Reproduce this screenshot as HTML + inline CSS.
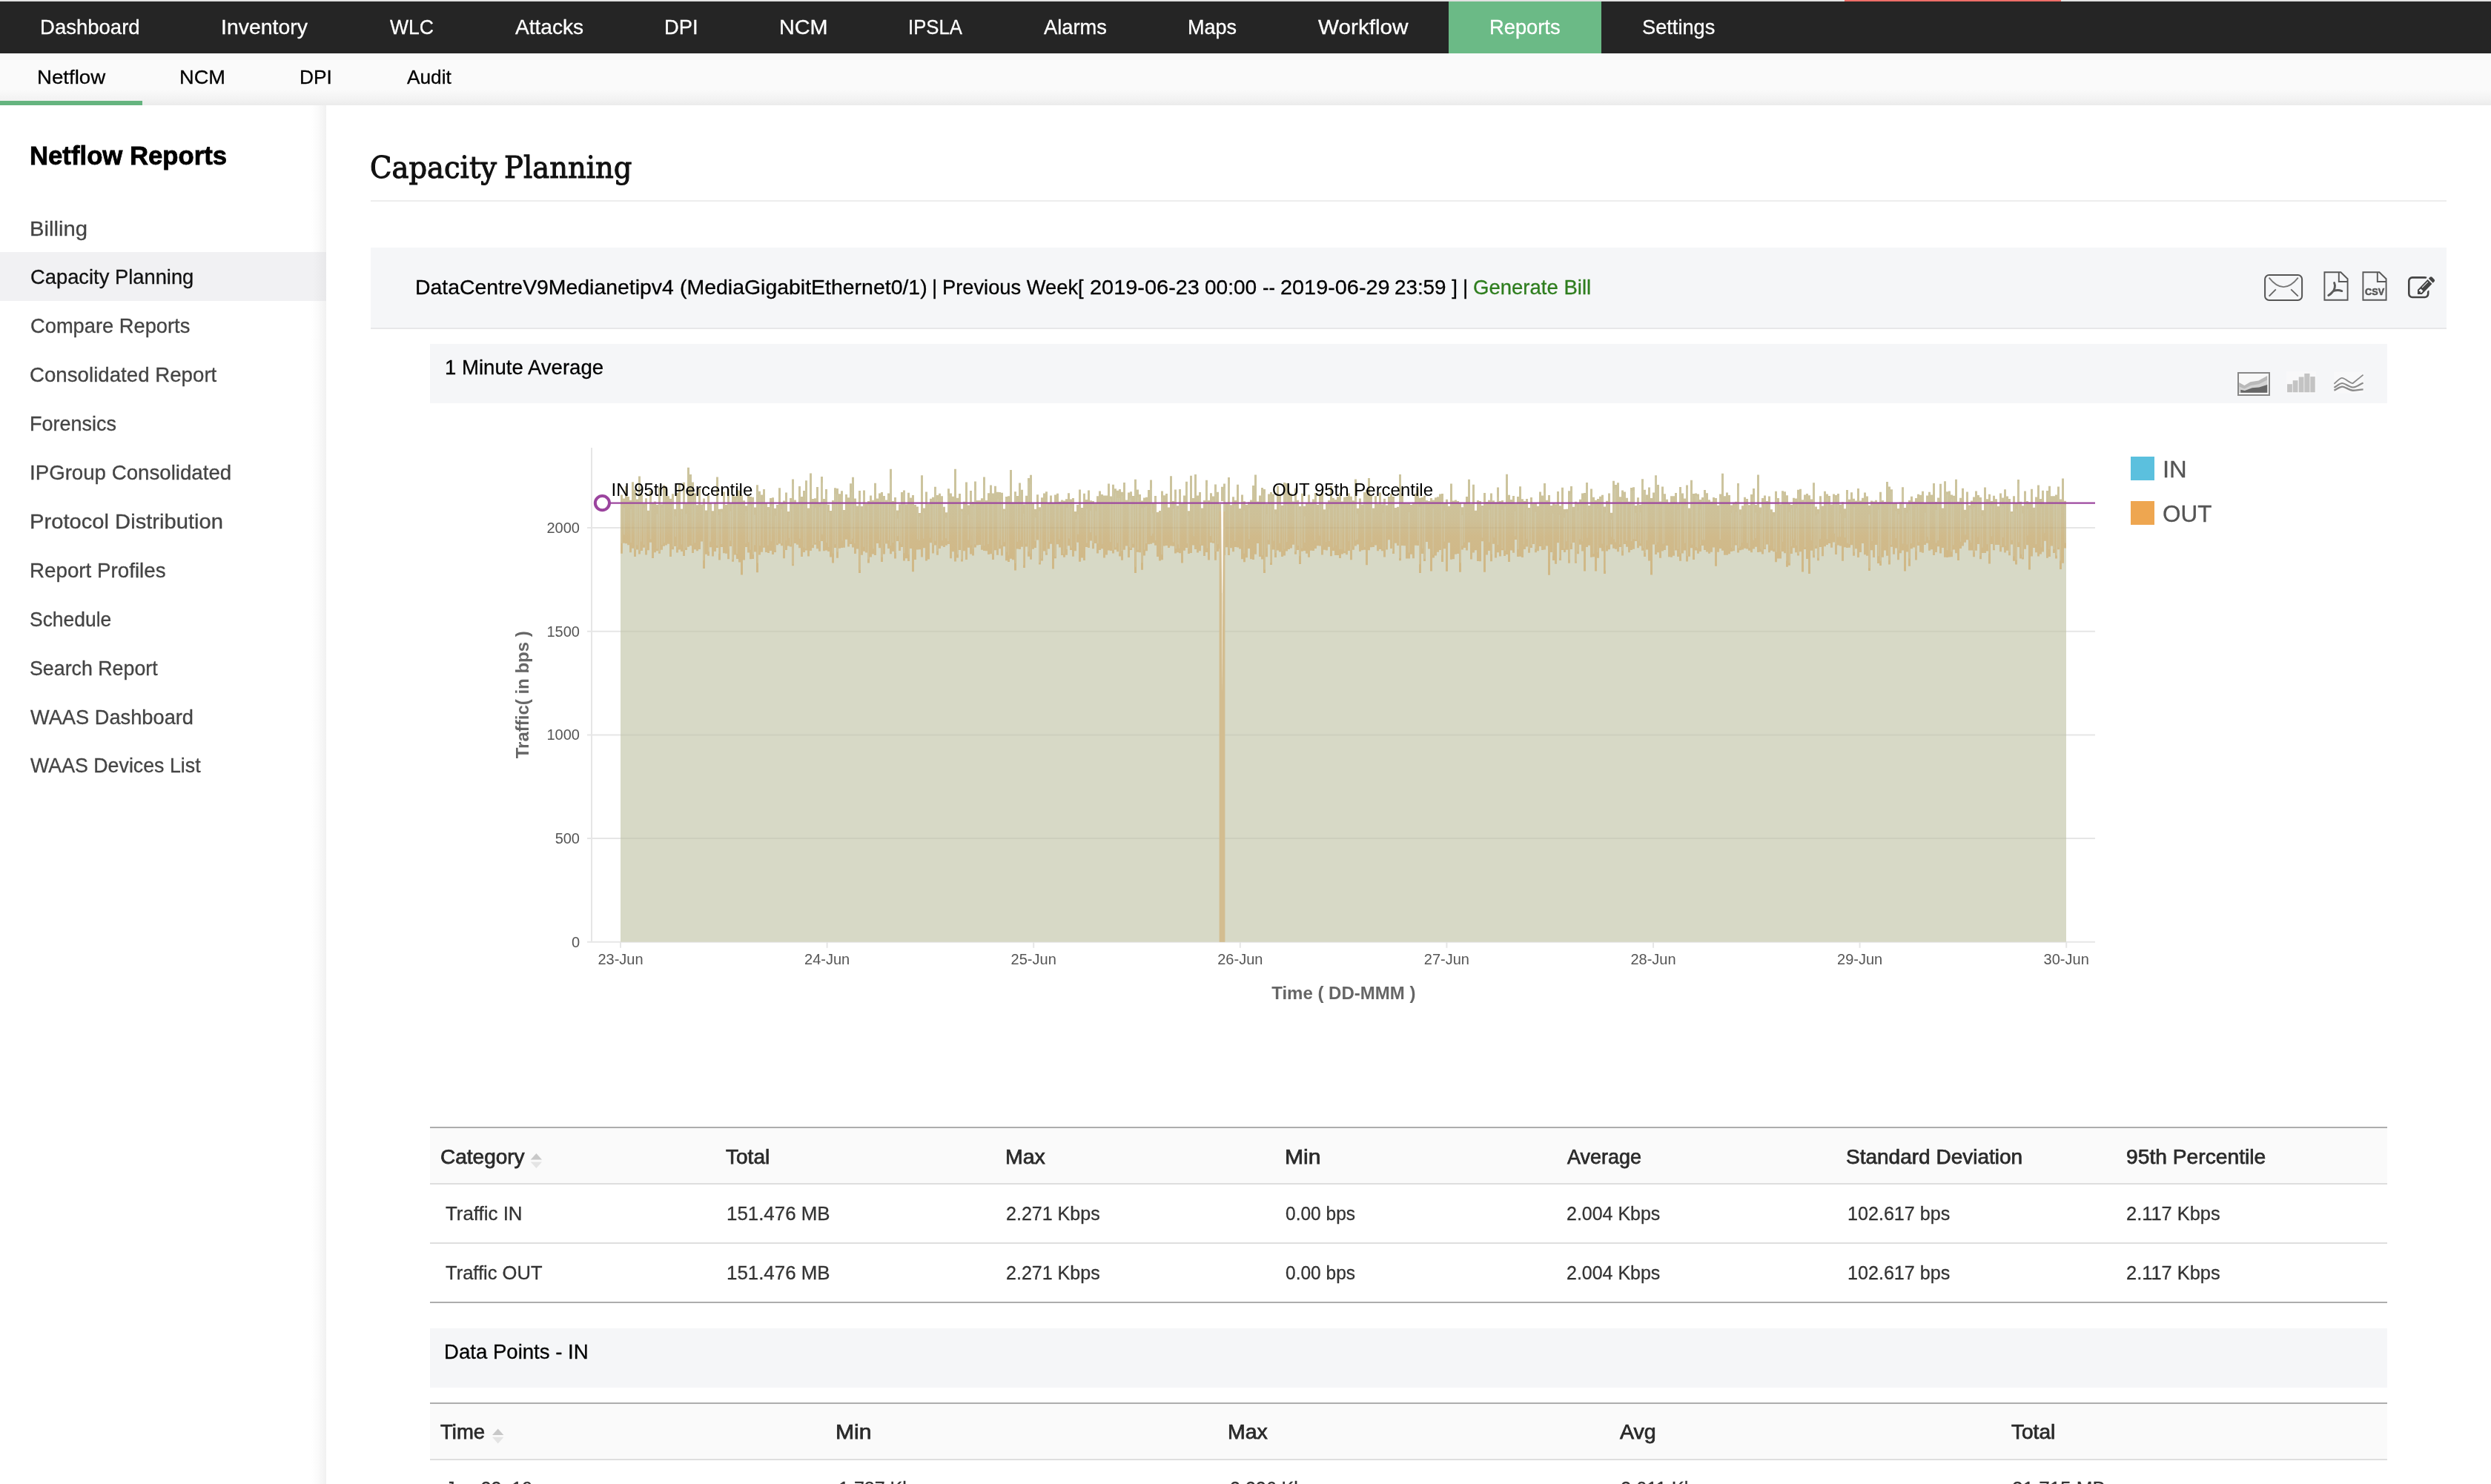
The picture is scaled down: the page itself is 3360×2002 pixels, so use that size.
<!DOCTYPE html>
<html lang="en"><head><meta charset="utf-8"><title>Capacity Planning</title>
<style>
html,body{margin:0;padding:0;background:#fff}
body{width:3360px;height:2002px;position:relative;overflow:hidden;font-family:'Liberation Sans',sans-serif}
.b{position:absolute}
.t{position:absolute;white-space:pre;transform-origin:0 0;display:block}
svg{position:absolute;left:0;top:0}
</style></head><body>
<div class="b" style="left:0;top:0;width:3360px;height:2px;background:#e2e2e2"></div>
<div class="b" style="left:2488px;top:0;width:292px;height:2px;background:#ee6e68"></div>
<div class="b" style="left:0;top:2px;width:3360px;height:70px;background:#252525"></div>
<div class="b" style="left:1954px;top:2px;width:206px;height:70px;background:#6bba86"></div>
<div class="b" style="left:0;top:72px;width:3360px;height:70px;background:linear-gradient(#fafafa 0,#fafafa 70%,#f3f3f3 88%,#ebebeb 100%)"></div>
<div class="b" style="left:0;top:136px;width:192px;height:6px;background:#65b47f"></div>
<div class="b" style="left:420px;top:142px;width:20px;height:1860px;background:linear-gradient(90deg,#fff 0,#fbfbfb 40%,#f1f1f1 100%)"></div>
<div class="b" style="left:0;top:340px;width:440px;height:66px;background:linear-gradient(90deg,#f1f1f3 0,#f1f1f3 96%,#e8e8ea 100%)"></div>
<div class="b" style="left:500px;top:270px;width:2800px;height:2px;background:#ededed"></div>
<div class="b" style="left:500px;top:334px;width:2800px;height:108px;background:#f5f6f8;border-bottom:2px solid #e7e7e9"></div>
<div class="b" style="left:580px;top:464px;width:2640px;height:80px;background:#f5f6f8"></div>
<!-- table 1 -->
<div class="b" style="left:580px;top:1520px;width:2640px;height:2px;background:#adadad"></div>
<div class="b" style="left:580px;top:1522px;width:2640px;height:74px;background:#fafafa"></div>
<div class="b" style="left:580px;top:1596px;width:2640px;height:2px;background:#dedede"></div>
<div class="b" style="left:580px;top:1676px;width:2640px;height:2px;background:#dedede"></div>
<div class="b" style="left:580px;top:1756px;width:2640px;height:2px;background:#adadad"></div>
<div class="b" style="left:580px;top:1792px;width:2640px;height:80px;background:#f5f6f8"></div>
<div class="b" style="left:580px;top:1892px;width:2640px;height:2px;background:#adadad"></div>
<div class="b" style="left:580px;top:1894px;width:2640px;height:74px;background:#fafafa"></div>
<div class="b" style="left:580px;top:1968px;width:2640px;height:2px;background:#dedede"></div>
<svg class="chart" style="will-change:transform" width="3360" height="2002" viewBox="0 0 3360 2002">
<defs><linearGradient id="bg" x1="0" y1="655" x2="0" y2="770" gradientUnits="userSpaceOnUse"><stop offset="0" stop-color="#ccc49e"/><stop offset="0.4" stop-color="#cec097"/><stop offset="0.6" stop-color="#d0ba8b"/><stop offset="1" stop-color="#d0b886"/></linearGradient></defs>
<g fill="none"><line x1="792" x2="2826" y1="1131.1" y2="1131.1" stroke="#e6e6e6" stroke-width="2"/><line x1="792" x2="2826" y1="991.4" y2="991.4" stroke="#e6e6e6" stroke-width="2"/><line x1="792" x2="2826" y1="851.7" y2="851.7" stroke="#e6e6e6" stroke-width="2"/><line x1="792" x2="2826" y1="712.0" y2="712.0" stroke="#e6e6e6" stroke-width="2"/>
<line x1="798" x2="798" y1="604" y2="1270.8" stroke="#e6e6e6" stroke-width="2"/>
<line x1="792" x2="2826" y1="1270.8" y2="1270.8" stroke="#e6e6e6" stroke-width="2"/><line x1="837.0" x2="837.0" y1="1270.8" y2="1278.8" stroke="#e6e6e6" stroke-width="2"/><line x1="1115.6" x2="1115.6" y1="1270.8" y2="1278.8" stroke="#e6e6e6" stroke-width="2"/><line x1="1394.2" x2="1394.2" y1="1270.8" y2="1278.8" stroke="#e6e6e6" stroke-width="2"/><line x1="1672.8" x2="1672.8" y1="1270.8" y2="1278.8" stroke="#e6e6e6" stroke-width="2"/><line x1="1951.4" x2="1951.4" y1="1270.8" y2="1278.8" stroke="#e6e6e6" stroke-width="2"/><line x1="2230.0" x2="2230.0" y1="1270.8" y2="1278.8" stroke="#e6e6e6" stroke-width="2"/><line x1="2508.6" x2="2508.6" y1="1270.8" y2="1278.8" stroke="#e6e6e6" stroke-width="2"/><line x1="2787.2" x2="2787.2" y1="1270.8" y2="1278.8" stroke="#e6e6e6" stroke-width="2"/></g>
<path d="M837.0 1270.8L837.00 745.8h3.00L840.00 731.7h3.00L843.00 732.3h3.00L846.00 734.3h3.00L849.00 744.2h3.00L852.00 738.7h3.00L855.00 749.9h3.00L858.00 740.4h3.00L861.00 746.4h3.00L864.00 741.9h3.00L867.00 737.7h3.00L870.00 747.6h3.00L873.00 741.3h3.00L876.00 730.7h3.00L879.00 751.9h3.00L882.00 744.3h3.00L885.00 742.3h3.00L888.00 745.7h3.00L891.00 740.7h3.00L894.00 735.7h3.00L897.00 734.5h3.00L900.00 732.7h3.00L903.00 750.0h3.00L906.00 740.2h3.00L909.00 735.9h3.00L912.00 744.5h3.00L915.00 740.4h3.00L918.00 743.1h3.00L921.00 748.9h3.00L924.00 740.9h3.00L927.00 736.8h3.00L930.00 735.2h3.00L933.00 745.0h3.00L936.00 740.3h3.00L939.00 742.2h3.00L942.00 739.9h3.00L945.00 729.6h3.00L948.00 766.0h3.00L951.00 746.8h3.00L954.00 748.7h3.00L957.00 737.2h3.00L960.00 749.6h3.00L963.00 743.1h3.00L966.00 738.0h3.00L969.00 754.5h3.00L972.00 737.1h3.00L975.00 745.2h3.00L978.00 745.8h3.00L981.00 753.3h3.00L984.00 736.0h3.00L987.00 756.7h3.00L990.00 747.5h3.00L993.00 753.0h3.00L996.00 757.4h3.00L999.00 774.4h3.00L1002.00 754.4h3.00L1005.00 736.9h3.00L1008.00 744.4h3.00L1011.00 753.3h3.00L1014.00 753.0h3.00L1017.00 743.4h3.00L1020.00 771.2h3.00L1023.00 747.5h3.00L1026.00 743.8h3.00L1029.00 737.8h3.00L1032.00 743.9h3.00L1035.00 744.9h3.00L1038.00 741.9h3.00L1041.00 746.9h3.00L1044.00 743.9h3.00L1047.00 734.3h3.00L1050.00 732.4h3.00L1053.00 735.3h3.00L1056.00 752.2h3.00L1059.00 740.9h3.00L1062.00 735.5h3.00L1065.00 736.5h3.00L1068.00 762.3h3.00L1071.00 732.0h3.00L1074.00 733.7h3.00L1077.00 738.3h3.00L1080.00 750.0h3.00L1083.00 744.1h3.00L1086.00 741.4h3.00L1089.00 749.5h3.00L1092.00 741.9h3.00L1095.00 738.2h3.00L1098.00 733.8h3.00L1101.00 739.2h3.00L1104.00 742.8h3.00L1107.00 728.9h3.00L1110.00 742.3h3.00L1113.00 741.6h3.00L1116.00 742.9h3.00L1119.00 750.4h3.00L1122.00 758.5h3.00L1125.00 738.0h3.00L1128.00 751.7h3.00L1131.00 738.8h3.00L1134.00 738.1h3.00L1137.00 737.7h3.00L1140.00 726.8h3.00L1143.00 736.6h3.00L1146.00 733.1h3.00L1149.00 737.4h3.00L1152.00 745.9h3.00L1155.00 739.5h3.00L1158.00 771.9h3.00L1161.00 747.7h3.00L1164.00 742.8h3.00L1167.00 744.4h3.00L1170.00 758.5h3.00L1173.00 750.6h3.00L1176.00 746.4h3.00L1179.00 748.1h3.00L1182.00 732.1h3.00L1185.00 738.2h3.00L1188.00 757.0h3.00L1191.00 746.5h3.00L1194.00 732.6h3.00L1197.00 739.1h3.00L1200.00 746.2h3.00L1203.00 743.1h3.00L1206.00 752.6h3.00L1209.00 729.1h3.00L1212.00 741.9h3.00L1215.00 736.9h3.00L1218.00 755.4h3.00L1221.00 752.3h3.00L1224.00 756.1h3.00L1227.00 739.0h3.00L1230.00 770.3h3.00L1233.00 754.0h3.00L1236.00 740.4h3.00L1239.00 740.2h3.00L1242.00 750.5h3.00L1245.00 738.2h3.00L1248.00 755.6h3.00L1251.00 753.4h3.00L1254.00 731.3h3.00L1257.00 745.6h3.00L1260.00 734.4h3.00L1263.00 747.8h3.00L1266.00 739.0h3.00L1269.00 735.5h3.00L1272.00 737.1h3.00L1275.00 734.8h3.00L1278.00 733.1h3.00L1281.00 752.3h3.00L1284.00 743.2h3.00L1287.00 756.4h3.00L1290.00 751.5h3.00L1293.00 741.0h3.00L1296.00 756.6h3.00L1299.00 742.3h3.00L1302.00 754.0h3.00L1305.00 737.8h3.00L1308.00 746.5h3.00L1311.00 748.5h3.00L1314.00 737.4h3.00L1317.00 734.5h3.00L1320.00 733.9h3.00L1323.00 740.7h3.00L1326.00 742.1h3.00L1329.00 742.3h3.00L1332.00 747.0h3.00L1335.00 746.3h3.00L1338.00 753.9h3.00L1341.00 741.3h3.00L1344.00 747.8h3.00L1347.00 739.2h3.00L1350.00 748.4h3.00L1353.00 736.2h3.00L1356.00 755.2h3.00L1359.00 756.9h3.00L1362.00 752.8h3.00L1365.00 754.3h3.00L1368.00 768.6h3.00L1371.00 739.6h3.00L1374.00 740.0h3.00L1377.00 736.8h3.00L1380.00 765.0h3.00L1383.00 736.4h3.00L1386.00 749.8h3.00L1389.00 753.7h3.00L1392.00 739.8h3.00L1395.00 738.1h3.00L1398.00 727.5h3.00L1401.00 760.4h3.00L1404.00 755.5h3.00L1407.00 742.6h3.00L1410.00 747.8h3.00L1413.00 739.5h3.00L1416.00 732.7h3.00L1419.00 766.5h3.00L1422.00 752.2h3.00L1425.00 733.3h3.00L1428.00 737.5h3.00L1431.00 748.1h3.00L1434.00 750.7h3.00L1437.00 747.8h3.00L1440.00 735.3h3.00L1443.00 740.9h3.00L1446.00 749.7h3.00L1449.00 742.3h3.00L1452.00 730.8h3.00L1455.00 756.8h3.00L1458.00 751.6h3.00L1461.00 755.0h3.00L1464.00 737.0h3.00L1467.00 737.9h3.00L1470.00 728.5h3.00L1473.00 739.2h3.00L1476.00 732.0h3.00L1479.00 745.5h3.00L1482.00 741.1h3.00L1485.00 739.2h3.00L1488.00 751.5h3.00L1491.00 747.6h3.00L1494.00 741.4h3.00L1497.00 742.1h3.00L1500.00 745.5h3.00L1503.00 740.4h3.00L1506.00 743.2h3.00L1509.00 749.6h3.00L1512.00 754.8h3.00L1515.00 740.7h3.00L1518.00 735.5h3.00L1521.00 750.9h3.00L1524.00 741.0h3.00L1527.00 737.8h3.00L1530.00 771.9h3.00L1533.00 743.7h3.00L1536.00 744.3h3.00L1539.00 767.8h3.00L1542.00 748.5h3.00L1545.00 742.3h3.00L1548.00 733.2h3.00L1551.00 732.8h3.00L1554.00 731.5h3.00L1557.00 734.7h3.00L1560.00 749.9h3.00L1563.00 755.6h3.00L1566.00 754.2h3.00L1569.00 735.4h3.00L1572.00 735.0h3.00L1575.00 738.1h3.00L1578.00 735.5h3.00L1581.00 735.7h3.00L1584.00 745.4h3.00L1587.00 744.3h3.00L1590.00 745.3h3.00L1593.00 758.5h3.00L1596.00 741.7h3.00L1599.00 737.9h3.00L1602.00 746.0h3.00L1605.00 745.0h3.00L1608.00 734.6h3.00L1611.00 740.1h3.00L1614.00 744.4h3.00L1617.00 742.3h3.00L1620.00 735.1h3.00L1623.00 749.0h3.00L1626.00 743.9h3.00L1629.00 754.5h3.00L1632.00 731.0h3.00L1635.00 731.7h3.00L1638.00 754.7h3.00L1641.00 742.9h3.00L1644.00 739.2h3.00L1647.00 749.0h3.00L1650.00 748.0h3.00L1653.00 737.2h3.00L1656.00 748.1h3.00L1659.00 738.2h3.00L1662.00 743.2h3.00L1665.00 737.0h3.00L1668.00 737.5h3.00L1671.00 739.5h3.00L1674.00 753.2h3.00L1677.00 757.3h3.00L1680.00 751.3h3.00L1683.00 739.1h3.00L1686.00 753.3h3.00L1689.00 754.1h3.00L1692.00 746.7h3.00L1695.00 732.1h3.00L1698.00 750.0h3.00L1701.00 753.5h3.00L1704.00 772.1h3.00L1707.00 750.2h3.00L1710.00 733.4h3.00L1713.00 760.9h3.00L1716.00 740.4h3.00L1719.00 751.1h3.00L1722.00 741.6h3.00L1725.00 743.5h3.00L1728.00 750.1h3.00L1731.00 748.4h3.00L1734.00 742.6h3.00L1737.00 739.9h3.00L1740.00 738.6h3.00L1743.00 733.8h3.00L1746.00 746.8h3.00L1749.00 741.0h3.00L1752.00 759.9h3.00L1755.00 742.8h3.00L1758.00 742.1h3.00L1761.00 745.7h3.00L1764.00 750.8h3.00L1767.00 741.7h3.00L1770.00 742.1h3.00L1773.00 739.0h3.00L1776.00 735.3h3.00L1779.00 735.5h3.00L1782.00 747.6h3.00L1785.00 740.7h3.00L1788.00 741.6h3.00L1791.00 736.8h3.00L1794.00 749.2h3.00L1797.00 742.1h3.00L1800.00 747.9h3.00L1803.00 748.1h3.00L1806.00 752.1h3.00L1809.00 746.4h3.00L1812.00 745.3h3.00L1815.00 747.2h3.00L1818.00 742.0h3.00L1821.00 754.2h3.00L1824.00 740.8h3.00L1827.00 735.5h3.00L1830.00 733.5h3.00L1833.00 743.0h3.00L1836.00 741.2h3.00L1839.00 740.8h3.00L1842.00 761.2h3.00L1845.00 741.3h3.00L1848.00 737.2h3.00L1851.00 737.1h3.00L1854.00 734.5h3.00L1857.00 742.2h3.00L1860.00 740.1h3.00L1863.00 742.2h3.00L1866.00 750.5h3.00L1869.00 740.5h3.00L1872.00 727.2h3.00L1875.00 739.0h3.00L1878.00 745.9h3.00L1881.00 731.7h3.00L1884.00 734.9h3.00L1887.00 755.3h3.00L1890.00 734.9h3.00L1893.00 735.2h3.00L1896.00 752.5h3.00L1899.00 752.6h3.00L1902.00 746.7h3.00L1905.00 752.2h3.00L1908.00 734.8h3.00L1911.00 735.0h3.00L1914.00 772.0h3.00L1917.00 746.1h3.00L1920.00 755.9h3.00L1923.00 730.0h3.00L1926.00 739.6h3.00L1929.00 769.6h3.00L1932.00 751.4h3.00L1935.00 748.6h3.00L1938.00 743.8h3.00L1941.00 741.0h3.00L1944.00 756.9h3.00L1947.00 739.3h3.00L1950.00 769.7h3.00L1953.00 731.3h3.00L1956.00 753.8h3.00L1959.00 753.3h3.00L1962.00 746.8h3.00L1965.00 746.1h3.00L1968.00 770.7h3.00L1971.00 740.4h3.00L1974.00 738.0h3.00L1977.00 741.5h3.00L1980.00 730.7h3.00L1983.00 753.6h3.00L1986.00 744.5h3.00L1989.00 741.2h3.00L1992.00 756.1h3.00L1995.00 756.3h3.00L1998.00 729.2h3.00L2001.00 770.7h3.00L2004.00 747.6h3.00L2007.00 742.1h3.00L2010.00 756.3h3.00L2013.00 732.7h3.00L2016.00 751.4h3.00L2019.00 744.2h3.00L2022.00 749.4h3.00L2025.00 741.3h3.00L2028.00 749.0h3.00L2031.00 747.0h3.00L2034.00 757.1h3.00L2037.00 741.5h3.00L2040.00 744.7h3.00L2043.00 727.0h3.00L2046.00 749.9h3.00L2049.00 749.8h3.00L2052.00 751.1h3.00L2055.00 739.9h3.00L2058.00 736.6h3.00L2061.00 744.8h3.00L2064.00 737.9h3.00L2067.00 733.0h3.00L2070.00 744.3h3.00L2073.00 742.3h3.00L2076.00 736.1h3.00L2079.00 741.0h3.00L2082.00 740.5h3.00L2085.00 735.4h3.00L2088.00 774.8h3.00L2091.00 744.0h3.00L2094.00 755.0h3.00L2097.00 759.8h3.00L2100.00 731.3h3.00L2103.00 755.1h3.00L2106.00 740.9h3.00L2109.00 744.0h3.00L2112.00 740.8h3.00L2115.00 758.7h3.00L2118.00 740.0h3.00L2121.00 731.1h3.00L2124.00 758.8h3.00L2127.00 746.3h3.00L2130.00 733.7h3.00L2133.00 742.4h3.00L2136.00 769.6h3.00L2139.00 737.1h3.00L2142.00 734.8h3.00L2145.00 750.8h3.00L2148.00 750.2h3.00L2151.00 769.6h3.00L2154.00 751.7h3.00L2157.00 738.3h3.00L2160.00 742.6h3.00L2163.00 773.0h3.00L2166.00 742.4h3.00L2169.00 740.3h3.00L2172.00 733.4h3.00L2175.00 738.8h3.00L2178.00 739.8h3.00L2181.00 743.3h3.00L2184.00 737.1h3.00L2187.00 748.6h3.00L2190.00 733.0h3.00L2193.00 736.7h3.00L2196.00 744.3h3.00L2199.00 741.1h3.00L2202.00 739.7h3.00L2205.00 728.9h3.00L2208.00 738.2h3.00L2211.00 735.6h3.00L2214.00 741.8h3.00L2217.00 750.0h3.00L2220.00 740.6h3.00L2223.00 755.5h3.00L2226.00 774.4h3.00L2229.00 733.6h3.00L2232.00 746.9h3.00L2235.00 744.2h3.00L2238.00 751.7h3.00L2241.00 742.6h3.00L2244.00 741.1h3.00L2247.00 735.1h3.00L2250.00 750.2h3.00L2253.00 750.7h3.00L2256.00 748.8h3.00L2259.00 741.6h3.00L2262.00 749.9h3.00L2265.00 755.7h3.00L2268.00 745.4h3.00L2271.00 741.6h3.00L2274.00 756.5h3.00L2277.00 749.7h3.00L2280.00 738.2h3.00L2283.00 753.9h3.00L2286.00 741.6h3.00L2289.00 745.7h3.00L2292.00 743.0h3.00L2295.00 735.1h3.00L2298.00 741.1h3.00L2301.00 743.6h3.00L2304.00 745.8h3.00L2307.00 743.7h3.00L2310.00 737.6h3.00L2313.00 762.7h3.00L2316.00 743.8h3.00L2319.00 738.9h3.00L2322.00 741.7h3.00L2325.00 747.7h3.00L2328.00 747.8h3.00L2331.00 746.3h3.00L2334.00 743.1h3.00L2337.00 742.3h3.00L2340.00 734.4h3.00L2343.00 744.4h3.00L2346.00 741.3h3.00L2349.00 740.6h3.00L2352.00 738.8h3.00L2355.00 739.4h3.00L2358.00 741.8h3.00L2361.00 744.2h3.00L2364.00 739.5h3.00L2367.00 736.7h3.00L2370.00 744.0h3.00L2373.00 743.5h3.00L2376.00 746.5h3.00L2379.00 740.0h3.00L2382.00 733.4h3.00L2385.00 744.2h3.00L2388.00 741.7h3.00L2391.00 743.3h3.00L2394.00 757.2h3.00L2397.00 752.6h3.00L2400.00 752.4h3.00L2403.00 743.0h3.00L2406.00 745.3h3.00L2409.00 763.8h3.00L2412.00 761.8h3.00L2415.00 746.1h3.00L2418.00 738.2h3.00L2421.00 744.2h3.00L2424.00 748.4h3.00L2427.00 743.2h3.00L2430.00 770.6h3.00L2433.00 740.1h3.00L2436.00 753.0h3.00L2439.00 772.9h3.00L2442.00 741.7h3.00L2445.00 751.2h3.00L2448.00 739.0h3.00L2451.00 755.2h3.00L2454.00 737.1h3.00L2457.00 749.3h3.00L2460.00 736.2h3.00L2463.00 734.0h3.00L2466.00 732.1h3.00L2469.00 737.7h3.00L2472.00 730.4h3.00L2475.00 747.0h3.00L2478.00 734.5h3.00L2481.00 735.4h3.00L2484.00 755.7h3.00L2487.00 737.3h3.00L2490.00 738.1h3.00L2493.00 737.7h3.00L2496.00 734.3h3.00L2499.00 748.7h3.00L2502.00 739.2h3.00L2505.00 751.0h3.00L2508.00 743.9h3.00L2511.00 732.1h3.00L2514.00 747.3h3.00L2517.00 748.8h3.00L2520.00 768.9h3.00L2523.00 741.2h3.00L2526.00 750.9h3.00L2529.00 734.0h3.00L2532.00 759.1h3.00L2535.00 761.9h3.00L2538.00 750.7h3.00L2541.00 741.6h3.00L2544.00 748.8h3.00L2547.00 760.6h3.00L2550.00 736.8h3.00L2553.00 746.8h3.00L2556.00 738.5h3.00L2559.00 754.2h3.00L2562.00 745.3h3.00L2565.00 741.5h3.00L2568.00 769.4h3.00L2571.00 743.6h3.00L2574.00 762.8h3.00L2577.00 739.2h3.00L2580.00 737.5h3.00L2583.00 754.5h3.00L2586.00 734.9h3.00L2589.00 743.7h3.00L2592.00 744.7h3.00L2595.00 734.0h3.00L2598.00 731.8h3.00L2601.00 741.8h3.00L2604.00 740.3h3.00L2607.00 748.1h3.00L2610.00 744.0h3.00L2613.00 736.3h3.00L2616.00 745.6h3.00L2619.00 737.9h3.00L2622.00 750.7h3.00L2625.00 750.9h3.00L2628.00 750.4h3.00L2631.00 750.2h3.00L2634.00 740.4h3.00L2637.00 745.3h3.00L2640.00 754.9h3.00L2643.00 739.0h3.00L2646.00 735.6h3.00L2649.00 730.7h3.00L2652.00 727.3h3.00L2655.00 741.4h3.00L2658.00 741.4h3.00L2661.00 750.2h3.00L2664.00 741.8h3.00L2667.00 732.9h3.00L2670.00 753.2h3.00L2673.00 745.1h3.00L2676.00 744.9h3.00L2679.00 742.4h3.00L2682.00 759.6h3.00L2685.00 732.9h3.00L2688.00 741.3h3.00L2691.00 734.0h3.00L2694.00 733.9h3.00L2697.00 743.3h3.00L2700.00 737.3h3.00L2703.00 744.5h3.00L2706.00 741.7h3.00L2709.00 748.3h3.00L2712.00 733.6h3.00L2715.00 755.8h3.00L2718.00 760.5h3.00L2721.00 736.9h3.00L2724.00 752.4h3.00L2727.00 753.6h3.00L2730.00 739.8h3.00L2733.00 734.3h3.00L2736.00 767.5h3.00L2739.00 749.6h3.00L2742.00 737.9h3.00L2745.00 744.3h3.00L2748.00 749.5h3.00L2751.00 746.6h3.00L2754.00 743.5h3.00L2757.00 728.8h3.00L2760.00 751.8h3.00L2763.00 750.0h3.00L2766.00 735.4h3.00L2769.00 744.9h3.00L2772.00 752.6h3.00L2775.00 740.2h3.00L2778.00 767.0h3.00L2781.00 758.8h3.00L2784.00 738.4h3.00L2787.0 1270.8z" fill="#d7d9c6"/>
<g stroke="#000" stroke-opacity="0.045" stroke-width="2">
<line x1="837" x2="2787" y1="1131.1" y2="1131.1"/><line x1="837" x2="2787" y1="991.4" y2="991.4"/><line x1="837" x2="2787" y1="851.7" y2="851.7"/></g>
<path d="M837.00 667.5V746.8h3.00V667.5zM840.00 672.5V732.7h3.00V672.5zM843.00 656.0V733.3h3.00V656.0zM846.00 670.0V735.3h3.00V670.0zM849.00 674.7V745.2h3.00V674.7zM852.00 650.3V739.7h3.00V650.3zM855.00 660.6V750.9h3.00V660.6zM858.00 673.6V741.4h3.00V673.6zM861.00 642.5V747.4h3.00V642.5zM864.00 667.2V742.9h3.00V667.2zM867.00 679.4V738.7h3.00V679.4zM870.00 672.3V748.6h3.00V672.3zM873.00 688.8V742.3h3.00V688.8zM876.00 662.0V731.7h3.00V662.0zM879.00 678.4V752.9h3.00V678.4zM882.00 676.4V745.3h3.00V676.4zM885.00 681.0V743.3h3.00V681.0zM888.00 657.6V746.7h3.00V657.6zM891.00 680.3V741.7h3.00V680.3zM894.00 654.6V736.7h3.00V654.6zM897.00 657.5V735.5h3.00V657.5zM900.00 669.2V733.7h3.00V669.2zM903.00 672.8V751.0h3.00V672.8zM906.00 666.2V741.2h3.00V666.2zM909.00 686.8V736.9h3.00V686.8zM912.00 664.9V745.5h3.00V664.9zM915.00 652.0V741.4h3.00V652.0zM918.00 686.5V744.1h3.00V686.5zM921.00 650.8V749.9h3.00V650.8zM924.00 679.5V741.9h3.00V679.5zM927.00 630.7V737.8h3.00V630.7zM930.00 640.0V736.2h3.00V640.0zM933.00 650.5V746.0h3.00V650.5zM936.00 665.4V741.3h3.00V665.4zM939.00 681.3V743.2h3.00V681.3zM942.00 659.0V740.9h3.00V659.0zM945.00 680.6V730.6h3.00V680.6zM948.00 672.4V767.0h3.00V672.4zM951.00 688.6V747.8h3.00V688.6zM954.00 668.6V749.7h3.00V668.6zM957.00 678.9V738.2h3.00V678.9zM960.00 689.3V750.6h3.00V689.3zM963.00 677.7V744.1h3.00V677.7zM966.00 643.4V739.0h3.00V643.4zM969.00 686.7V755.5h3.00V686.7zM972.00 686.6V738.1h3.00V686.6zM975.00 663.6V746.2h3.00V663.6zM978.00 681.0V746.8h3.00V681.0zM981.00 659.0V754.3h3.00V659.0zM984.00 678.0V737.0h3.00V678.0zM987.00 667.7V757.7h3.00V667.7zM990.00 669.5V748.5h3.00V669.5zM993.00 661.0V754.0h3.00V661.0zM996.00 661.8V758.4h3.00V661.8zM999.00 668.2V775.4h3.00V668.2zM1002.00 675.2V755.4h3.00V675.2zM1005.00 682.2V737.9h3.00V682.2zM1008.00 666.6V745.4h3.00V666.6zM1011.00 669.9V754.3h3.00V669.9zM1014.00 670.8V754.0h3.00V670.8zM1017.00 684.4V744.4h3.00V684.4zM1020.00 654.2V772.2h3.00V654.2zM1023.00 662.8V748.5h3.00V662.8zM1026.00 667.6V744.8h3.00V667.6zM1029.00 660.0V738.8h3.00V660.0zM1032.00 678.7V744.9h3.00V678.7zM1035.00 684.1V745.9h3.00V684.1zM1038.00 672.0V742.9h3.00V672.0zM1041.00 671.3V747.9h3.00V671.3zM1044.00 685.8V744.9h3.00V685.8zM1047.00 681.0V735.3h3.00V681.0zM1050.00 658.3V733.4h3.00V658.3zM1053.00 679.0V736.3h3.00V679.0zM1056.00 675.5V753.2h3.00V675.5zM1059.00 664.4V741.9h3.00V664.4zM1062.00 690.0V736.5h3.00V690.0zM1065.00 672.1V737.5h3.00V672.1zM1068.00 646.6V763.3h3.00V646.6zM1071.00 674.6V733.0h3.00V674.6zM1074.00 679.2V734.7h3.00V679.2zM1077.00 656.1V739.3h3.00V656.1zM1080.00 670.0V751.0h3.00V670.0zM1083.00 661.9V745.1h3.00V661.9zM1086.00 648.3V742.4h3.00V648.3zM1089.00 685.5V750.5h3.00V685.5zM1092.00 638.6V742.9h3.00V638.6zM1095.00 672.9V739.2h3.00V672.9zM1098.00 672.3V734.8h3.00V672.3zM1101.00 656.9V740.2h3.00V656.9zM1104.00 678.3V743.8h3.00V678.3zM1107.00 643.0V729.9h3.00V643.0zM1110.00 672.9V743.3h3.00V672.9zM1113.00 660.0V742.6h3.00V660.0zM1116.00 680.8V743.9h3.00V680.8zM1119.00 689.0V751.4h3.00V689.0zM1122.00 674.9V759.5h3.00V674.9zM1125.00 658.2V739.0h3.00V658.2zM1128.00 658.9V752.7h3.00V658.9zM1131.00 666.3V739.8h3.00V666.3zM1134.00 662.2V739.1h3.00V662.2zM1137.00 688.0V738.7h3.00V688.0zM1140.00 667.1V727.8h3.00V667.1zM1143.00 671.2V737.6h3.00V671.2zM1146.00 652.2V734.1h3.00V652.2zM1149.00 643.7V738.4h3.00V643.7zM1152.00 672.4V746.9h3.00V672.4zM1155.00 682.6V740.5h3.00V682.6zM1158.00 661.9V772.9h3.00V661.9zM1161.00 683.1V748.7h3.00V683.1zM1164.00 661.5V743.8h3.00V661.5zM1167.00 679.7V745.4h3.00V679.7zM1170.00 676.1V759.5h3.00V676.1zM1173.00 668.5V751.6h3.00V668.5zM1176.00 674.7V747.4h3.00V674.7zM1179.00 651.8V749.1h3.00V651.8zM1182.00 672.5V733.1h3.00V672.5zM1185.00 665.4V739.2h3.00V665.4zM1188.00 663.9V758.0h3.00V663.9zM1191.00 669.0V747.5h3.00V669.0zM1194.00 674.4V733.6h3.00V674.4zM1197.00 665.5V740.1h3.00V665.5zM1200.00 632.7V747.2h3.00V632.7zM1203.00 675.9V744.1h3.00V675.9zM1206.00 671.0V753.6h3.00V671.0zM1209.00 688.6V730.1h3.00V688.6zM1212.00 680.2V742.9h3.00V680.2zM1215.00 664.1V737.9h3.00V664.1zM1218.00 661.6V756.4h3.00V661.6zM1221.00 680.3V753.3h3.00V680.3zM1224.00 664.8V757.1h3.00V664.8zM1227.00 671.6V740.0h3.00V671.6zM1230.00 668.0V771.3h3.00V668.0zM1233.00 680.9V755.0h3.00V680.9zM1236.00 683.6V741.4h3.00V683.6zM1239.00 692.0V741.2h3.00V692.0zM1242.00 641.2V751.5h3.00V641.2zM1245.00 685.4V739.2h3.00V685.4zM1248.00 663.4V756.6h3.00V663.4zM1251.00 680.0V754.4h3.00V680.0zM1254.00 672.8V732.3h3.00V672.8zM1257.00 670.7V746.6h3.00V670.7zM1260.00 656.8V735.4h3.00V656.8zM1263.00 668.0V748.8h3.00V668.0zM1266.00 665.7V740.0h3.00V665.7zM1269.00 669.3V736.5h3.00V669.3zM1272.00 683.8V738.1h3.00V683.8zM1275.00 691.2V735.8h3.00V691.2zM1278.00 659.3V734.1h3.00V659.3zM1281.00 665.6V753.3h3.00V665.6zM1284.00 669.8V744.2h3.00V669.8zM1287.00 632.8V757.4h3.00V632.8zM1290.00 671.8V752.5h3.00V671.8zM1293.00 666.0V742.0h3.00V666.0zM1296.00 686.6V757.6h3.00V686.6zM1299.00 676.8V743.3h3.00V676.8zM1302.00 650.4V755.0h3.00V650.4zM1305.00 681.6V738.8h3.00V681.6zM1308.00 662.1V747.5h3.00V662.1zM1311.00 677.1V749.5h3.00V677.1zM1314.00 649.4V738.4h3.00V649.4zM1317.00 675.1V735.5h3.00V675.1zM1320.00 674.9V734.9h3.00V674.9zM1323.00 672.3V741.7h3.00V672.3zM1326.00 643.6V743.1h3.00V643.6zM1329.00 675.1V743.3h3.00V675.1zM1332.00 665.3V748.0h3.00V665.3zM1335.00 654.5V747.3h3.00V654.5zM1338.00 665.6V754.9h3.00V665.6zM1341.00 655.7V742.3h3.00V655.7zM1344.00 663.7V748.8h3.00V663.7zM1347.00 663.9V740.2h3.00V663.9zM1350.00 664.8V749.4h3.00V664.8zM1353.00 686.4V737.2h3.00V686.4zM1356.00 669.9V756.2h3.00V669.9zM1359.00 669.3V757.9h3.00V669.3zM1362.00 633.9V753.8h3.00V633.9zM1365.00 677.5V755.3h3.00V677.5zM1368.00 663.2V769.6h3.00V663.2zM1371.00 668.9V740.6h3.00V668.9zM1374.00 651.6V741.0h3.00V651.6zM1377.00 660.8V737.8h3.00V660.8zM1380.00 680.3V766.0h3.00V680.3zM1383.00 668.8V737.4h3.00V668.8zM1386.00 644.9V750.8h3.00V644.9zM1389.00 640.8V754.7h3.00V640.8zM1392.00 677.9V740.8h3.00V677.9zM1395.00 686.8V739.1h3.00V686.8zM1398.00 667.3V728.5h3.00V667.3zM1401.00 684.3V761.4h3.00V684.3zM1404.00 671.2V756.5h3.00V671.2zM1407.00 665.4V743.6h3.00V665.4zM1410.00 663.2V748.8h3.00V663.2zM1413.00 678.7V740.5h3.00V678.7zM1416.00 668.5V733.7h3.00V668.5zM1419.00 678.1V767.5h3.00V678.1zM1422.00 667.6V753.2h3.00V667.6zM1425.00 665.8V734.3h3.00V665.8zM1428.00 676.8V738.5h3.00V676.8zM1431.00 674.5V749.1h3.00V674.5zM1434.00 675.6V751.7h3.00V675.6zM1437.00 673.2V748.8h3.00V673.2zM1440.00 665.3V736.3h3.00V665.3zM1443.00 673.5V741.9h3.00V673.5zM1446.00 671.9V750.7h3.00V671.9zM1449.00 690.1V743.3h3.00V690.1zM1452.00 681.0V731.8h3.00V681.0zM1455.00 660.6V757.8h3.00V660.6zM1458.00 685.1V752.6h3.00V685.1zM1461.00 665.7V756.0h3.00V665.7zM1464.00 673.9V738.0h3.00V673.9zM1467.00 661.6V738.9h3.00V661.6zM1470.00 675.3V729.5h3.00V675.3zM1473.00 676.0V740.2h3.00V676.0zM1476.00 679.4V733.0h3.00V679.4zM1479.00 669.3V746.5h3.00V669.3zM1482.00 662.4V742.1h3.00V662.4zM1485.00 667.1V740.2h3.00V667.1zM1488.00 668.4V752.5h3.00V668.4zM1491.00 668.6V748.6h3.00V668.6zM1494.00 652.4V742.4h3.00V652.4zM1497.00 669.6V743.1h3.00V669.6zM1500.00 653.7V746.5h3.00V653.7zM1503.00 659.2V741.4h3.00V659.2zM1506.00 661.7V744.2h3.00V661.7zM1509.00 660.1V750.6h3.00V660.1zM1512.00 663.7V755.8h3.00V663.7zM1515.00 651.1V741.7h3.00V651.1zM1518.00 674.5V736.5h3.00V674.5zM1521.00 664.5V751.9h3.00V664.5zM1524.00 663.2V742.0h3.00V663.2zM1527.00 669.0V738.8h3.00V669.0zM1530.00 646.7V772.9h3.00V646.7zM1533.00 660.6V744.7h3.00V660.6zM1536.00 667.0V745.3h3.00V667.0zM1539.00 675.4V768.8h3.00V675.4zM1542.00 671.5V749.5h3.00V671.5zM1545.00 670.8V743.3h3.00V670.8zM1548.00 661.0V734.2h3.00V661.0zM1551.00 647.6V733.8h3.00V647.6zM1554.00 678.8V732.5h3.00V678.8zM1557.00 668.9V735.7h3.00V668.9zM1560.00 691.1V750.9h3.00V691.1zM1563.00 688.9V756.6h3.00V688.9zM1566.00 662.5V755.2h3.00V662.5zM1569.00 668.2V736.4h3.00V668.2zM1572.00 666.1V736.0h3.00V666.1zM1575.00 684.5V739.1h3.00V684.5zM1578.00 642.2V736.5h3.00V642.2zM1581.00 676.0V736.7h3.00V676.0zM1584.00 660.4V746.4h3.00V660.4zM1587.00 682.3V745.3h3.00V682.3zM1590.00 659.9V746.3h3.00V659.9zM1593.00 679.5V759.5h3.00V679.5zM1596.00 668.5V742.7h3.00V668.5zM1599.00 649.8V738.9h3.00V649.8zM1602.00 689.2V747.0h3.00V689.2zM1605.00 641.8V746.0h3.00V641.8zM1608.00 672.0V735.6h3.00V672.0zM1611.00 640.0V741.1h3.00V640.0zM1614.00 668.4V745.4h3.00V668.4zM1617.00 663.9V743.3h3.00V663.9zM1620.00 685.4V736.1h3.00V685.4zM1623.00 674.9V750.0h3.00V674.9zM1626.00 647.7V744.9h3.00V647.7zM1629.00 675.1V755.5h3.00V675.1zM1632.00 665.3V732.0h3.00V665.3zM1635.00 669.6V732.7h3.00V669.6zM1638.00 653.4V755.7h3.00V653.4zM1641.00 663.7V743.9h3.00V663.7zM1644.00 680.0V740.2h3.00V680.0zM1647.00 656.8V750.0h3.00V656.8zM1650.00 652.5V749.0h3.00V652.5zM1653.00 677.7V738.2h3.00V677.7zM1656.00 644.0V749.1h3.00V644.0zM1659.00 681.2V739.2h3.00V681.2zM1662.00 670.3V744.2h3.00V670.3zM1665.00 675.0V738.0h3.00V675.0zM1668.00 653.8V738.5h3.00V653.8zM1671.00 685.9V740.5h3.00V685.9zM1674.00 667.6V754.2h3.00V667.6zM1677.00 676.3V758.3h3.00V676.3zM1680.00 681.0V752.3h3.00V681.0zM1683.00 677.2V740.1h3.00V677.2zM1686.00 674.5V754.3h3.00V674.5zM1689.00 655.0V755.1h3.00V655.0zM1692.00 640.5V747.7h3.00V640.5zM1695.00 676.5V733.1h3.00V676.5zM1698.00 668.5V751.0h3.00V668.5zM1701.00 657.9V754.5h3.00V657.9zM1704.00 660.1V773.1h3.00V660.1zM1707.00 680.0V751.2h3.00V680.0zM1710.00 666.5V734.4h3.00V666.5zM1713.00 663.9V761.9h3.00V663.9zM1716.00 666.4V741.4h3.00V666.4zM1719.00 687.3V752.1h3.00V687.3zM1722.00 655.4V742.6h3.00V655.4zM1725.00 668.1V744.5h3.00V668.1zM1728.00 681.8V751.1h3.00V681.8zM1731.00 651.1V749.4h3.00V651.1zM1734.00 652.0V743.6h3.00V652.0zM1737.00 663.2V740.9h3.00V663.2zM1740.00 665.7V739.6h3.00V665.7zM1743.00 676.5V734.8h3.00V676.5zM1746.00 658.7V747.8h3.00V658.7zM1749.00 674.7V742.0h3.00V674.7zM1752.00 683.1V760.9h3.00V683.1zM1755.00 665.8V743.8h3.00V665.8zM1758.00 682.8V743.1h3.00V682.8zM1761.00 678.1V746.7h3.00V678.1zM1764.00 667.6V751.8h3.00V667.6zM1767.00 677.7V742.7h3.00V677.7zM1770.00 673.5V743.1h3.00V673.5zM1773.00 665.0V740.0h3.00V665.0zM1776.00 681.1V736.3h3.00V681.1zM1779.00 667.6V736.5h3.00V667.6zM1782.00 663.4V748.6h3.00V663.4zM1785.00 687.2V741.7h3.00V687.2zM1788.00 679.4V742.6h3.00V679.4zM1791.00 674.9V737.8h3.00V674.9zM1794.00 655.7V750.2h3.00V655.7zM1797.00 671.8V743.1h3.00V671.8zM1800.00 674.1V748.9h3.00V674.1zM1803.00 670.2V749.1h3.00V670.2zM1806.00 664.7V753.1h3.00V664.7zM1809.00 676.5V747.4h3.00V676.5zM1812.00 670.7V746.3h3.00V670.7zM1815.00 669.9V748.2h3.00V669.9zM1818.00 665.4V743.0h3.00V665.4zM1821.00 669.7V755.2h3.00V669.7zM1824.00 675.3V741.8h3.00V675.3zM1827.00 646.5V736.5h3.00V646.5zM1830.00 685.7V734.5h3.00V685.7zM1833.00 672.6V744.0h3.00V672.6zM1836.00 680.6V742.2h3.00V680.6zM1839.00 664.1V741.8h3.00V664.1zM1842.00 660.8V762.2h3.00V660.8zM1845.00 645.0V742.3h3.00V645.0zM1848.00 668.3V738.2h3.00V668.3zM1851.00 685.6V738.1h3.00V685.6zM1854.00 669.3V735.5h3.00V669.3zM1857.00 679.9V743.2h3.00V679.9zM1860.00 664.6V741.1h3.00V664.6zM1863.00 680.2V743.2h3.00V680.2zM1866.00 672.8V751.5h3.00V672.8zM1869.00 681.4V741.5h3.00V681.4zM1872.00 670.1V728.2h3.00V670.1zM1875.00 666.3V740.0h3.00V666.3zM1878.00 670.1V746.9h3.00V670.1zM1881.00 685.0V732.7h3.00V685.0zM1884.00 683.8V735.9h3.00V683.8zM1887.00 640.1V756.3h3.00V640.1zM1890.00 665.4V735.9h3.00V665.4zM1893.00 678.8V736.2h3.00V678.8zM1896.00 679.3V753.5h3.00V679.3zM1899.00 678.9V753.6h3.00V678.9zM1902.00 680.9V747.7h3.00V680.9zM1905.00 677.7V753.2h3.00V677.7zM1908.00 665.8V735.8h3.00V665.8zM1911.00 657.4V736.0h3.00V657.4zM1914.00 671.7V773.0h3.00V671.7zM1917.00 671.0V747.1h3.00V671.0zM1920.00 668.8V756.9h3.00V668.8zM1923.00 674.9V731.0h3.00V674.9zM1926.00 676.1V740.6h3.00V676.1zM1929.00 672.0V770.6h3.00V672.0zM1932.00 674.6V752.4h3.00V674.6zM1935.00 671.2V749.6h3.00V671.2zM1938.00 670.3V744.8h3.00V670.3zM1941.00 666.6V742.0h3.00V666.6zM1944.00 666.0V757.9h3.00V666.0zM1947.00 679.3V740.3h3.00V679.3zM1950.00 673.7V770.7h3.00V673.7zM1953.00 682.8V732.3h3.00V682.8zM1956.00 652.4V754.8h3.00V652.4zM1959.00 675.4V754.3h3.00V675.4zM1962.00 674.4V747.8h3.00V674.4zM1965.00 676.0V747.1h3.00V676.0zM1968.00 678.4V771.7h3.00V678.4zM1971.00 684.2V741.4h3.00V684.2zM1974.00 679.1V739.0h3.00V679.1zM1977.00 670.0V742.5h3.00V670.0zM1980.00 646.8V731.7h3.00V646.8zM1983.00 679.9V754.6h3.00V679.9zM1986.00 653.7V745.5h3.00V653.7zM1989.00 688.8V742.2h3.00V688.8zM1992.00 675.1V757.1h3.00V675.1zM1995.00 676.1V757.3h3.00V676.1zM1998.00 682.1V730.2h3.00V682.1zM2001.00 665.1V771.7h3.00V665.1zM2004.00 676.9V748.6h3.00V676.9zM2007.00 674.7V743.1h3.00V674.7zM2010.00 665.5V757.3h3.00V665.5zM2013.00 675.2V733.7h3.00V675.2zM2016.00 677.4V752.4h3.00V677.4zM2019.00 657.5V745.2h3.00V657.5zM2022.00 675.9V750.4h3.00V675.9zM2025.00 675.1V742.3h3.00V675.1zM2028.00 679.1V750.0h3.00V679.1zM2031.00 639.7V748.0h3.00V639.7zM2034.00 667.7V758.1h3.00V667.7zM2037.00 674.0V742.5h3.00V674.0zM2040.00 668.9V745.7h3.00V668.9zM2043.00 679.8V728.0h3.00V679.8zM2046.00 670.0V750.9h3.00V670.0zM2049.00 656.3V750.8h3.00V656.3zM2052.00 673.3V752.1h3.00V673.3zM2055.00 676.1V740.9h3.00V676.1zM2058.00 672.9V737.6h3.00V672.9zM2061.00 685.1V745.8h3.00V685.1zM2064.00 671.0V738.9h3.00V671.0zM2067.00 679.3V734.0h3.00V679.3zM2070.00 678.7V745.3h3.00V678.7zM2073.00 682.8V743.3h3.00V682.8zM2076.00 663.4V737.1h3.00V663.4zM2079.00 668.5V742.0h3.00V668.5zM2082.00 652.0V741.5h3.00V652.0zM2085.00 674.8V736.4h3.00V674.8zM2088.00 668.1V775.8h3.00V668.1zM2091.00 682.0V745.0h3.00V682.0zM2094.00 678.9V756.0h3.00V678.9zM2097.00 680.2V760.8h3.00V680.2zM2100.00 663.1V732.3h3.00V663.1zM2103.00 682.2V756.1h3.00V682.2zM2106.00 657.8V741.9h3.00V657.8zM2109.00 686.9V745.0h3.00V686.9zM2112.00 686.7V741.8h3.00V686.7zM2115.00 662.3V759.7h3.00V662.3zM2118.00 656.0V741.0h3.00V656.0zM2121.00 683.7V732.1h3.00V683.7zM2124.00 676.8V759.8h3.00V676.8zM2127.00 678.1V747.3h3.00V678.1zM2130.00 673.8V734.7h3.00V673.8zM2133.00 665.6V743.4h3.00V665.6zM2136.00 665.0V770.6h3.00V665.0zM2139.00 651.1V738.1h3.00V651.1zM2142.00 682.0V735.8h3.00V682.0zM2145.00 659.6V751.8h3.00V659.6zM2148.00 670.7V751.2h3.00V670.7zM2151.00 674.7V770.6h3.00V674.7zM2154.00 672.9V752.7h3.00V672.9zM2157.00 669.7V739.3h3.00V669.7zM2160.00 667.8V743.6h3.00V667.8zM2163.00 683.6V774.0h3.00V683.6zM2166.00 675.7V743.4h3.00V675.7zM2169.00 665.6V741.3h3.00V665.6zM2172.00 691.7V734.4h3.00V691.7zM2175.00 648.7V739.8h3.00V648.7zM2178.00 653.9V740.8h3.00V653.9zM2181.00 651.3V744.3h3.00V651.3zM2184.00 670.3V738.1h3.00V670.3zM2187.00 661.4V749.6h3.00V661.4zM2190.00 663.6V734.0h3.00V663.6zM2193.00 671.7V737.7h3.00V671.7zM2196.00 676.8V745.3h3.00V676.8zM2199.00 657.9V742.1h3.00V657.9zM2202.00 657.2V740.7h3.00V657.2zM2205.00 681.9V729.9h3.00V681.9zM2208.00 671.2V739.2h3.00V671.2zM2211.00 680.7V736.6h3.00V680.7zM2214.00 646.2V742.8h3.00V646.2zM2217.00 660.7V751.0h3.00V660.7zM2220.00 667.4V741.6h3.00V667.4zM2223.00 657.6V756.5h3.00V657.6zM2226.00 672.0V775.4h3.00V672.0zM2229.00 664.5V734.6h3.00V664.5zM2232.00 641.2V747.9h3.00V641.2zM2235.00 654.1V745.2h3.00V654.1zM2238.00 676.6V752.7h3.00V676.6zM2241.00 656.5V743.6h3.00V656.5zM2244.00 666.3V742.1h3.00V666.3zM2247.00 673.8V736.1h3.00V673.8zM2250.00 677.9V751.2h3.00V677.9zM2253.00 669.2V751.7h3.00V669.2zM2256.00 669.3V749.8h3.00V669.3zM2259.00 665.1V742.6h3.00V665.1zM2262.00 679.7V750.9h3.00V679.7zM2265.00 657.1V756.7h3.00V657.1zM2268.00 665.4V746.4h3.00V665.4zM2271.00 672.4V742.6h3.00V672.4zM2274.00 654.4V757.5h3.00V654.4zM2277.00 685.5V750.7h3.00V685.5zM2280.00 647.7V739.2h3.00V647.7zM2283.00 666.1V754.9h3.00V666.1zM2286.00 665.4V742.6h3.00V665.4zM2289.00 666.5V746.7h3.00V666.5zM2292.00 673.9V744.0h3.00V673.9zM2295.00 671.0V736.1h3.00V671.0zM2298.00 661.1V742.1h3.00V661.1zM2301.00 665.2V744.6h3.00V665.2zM2304.00 674.2V746.8h3.00V674.2zM2307.00 676.8V744.7h3.00V676.8zM2310.00 671.1V738.6h3.00V671.1zM2313.00 672.0V763.7h3.00V672.0zM2316.00 681.8V744.8h3.00V681.8zM2319.00 666.4V739.9h3.00V666.4zM2322.00 638.7V742.7h3.00V638.7zM2325.00 669.2V748.7h3.00V669.2zM2328.00 664.6V748.8h3.00V664.6zM2331.00 667.9V747.3h3.00V667.9zM2334.00 681.4V744.1h3.00V681.4zM2337.00 677.8V743.3h3.00V677.8zM2340.00 676.8V735.4h3.00V676.8zM2343.00 652.0V745.4h3.00V652.0zM2346.00 687.2V742.3h3.00V687.2zM2349.00 682.3V741.6h3.00V682.3zM2352.00 670.8V739.8h3.00V670.8zM2355.00 673.0V740.4h3.00V673.0zM2358.00 681.3V742.8h3.00V681.3zM2361.00 667.0V745.2h3.00V667.0zM2364.00 659.1V740.5h3.00V659.1zM2367.00 680.9V737.7h3.00V680.9zM2370.00 640.6V745.0h3.00V640.6zM2373.00 684.5V744.5h3.00V684.5zM2376.00 672.1V747.5h3.00V672.1zM2379.00 668.4V741.0h3.00V668.4zM2382.00 675.9V734.4h3.00V675.9zM2385.00 669.5V745.2h3.00V669.5zM2388.00 687.3V742.7h3.00V687.3zM2391.00 691.1V744.3h3.00V691.1zM2394.00 662.7V758.2h3.00V662.7zM2397.00 672.0V753.6h3.00V672.0zM2400.00 680.3V753.4h3.00V680.3zM2403.00 662.2V744.0h3.00V662.2zM2406.00 663.3V746.3h3.00V663.3zM2409.00 668.3V764.8h3.00V668.3zM2412.00 679.2V762.8h3.00V679.2zM2415.00 681.1V747.1h3.00V681.1zM2418.00 671.7V739.2h3.00V671.7zM2421.00 672.4V745.2h3.00V672.4zM2424.00 660.7V749.4h3.00V660.7zM2427.00 659.7V744.2h3.00V659.7zM2430.00 674.3V771.6h3.00V674.3zM2433.00 667.5V741.1h3.00V667.5zM2436.00 665.9V754.0h3.00V665.9zM2439.00 668.2V773.9h3.00V668.2zM2442.00 673.6V742.7h3.00V673.6zM2445.00 651.2V752.2h3.00V651.2zM2448.00 683.4V740.0h3.00V683.4zM2451.00 687.0V756.2h3.00V687.0zM2454.00 669.2V738.1h3.00V669.2zM2457.00 682.4V750.3h3.00V682.4zM2460.00 662.8V737.2h3.00V662.8zM2463.00 666.6V735.0h3.00V666.6zM2466.00 669.1V733.1h3.00V669.1zM2469.00 680.5V738.7h3.00V680.5zM2472.00 666.4V731.4h3.00V666.4zM2475.00 668.0V748.0h3.00V668.0zM2478.00 666.0V735.5h3.00V666.0zM2481.00 680.8V736.4h3.00V680.8zM2484.00 677.2V756.7h3.00V677.2zM2487.00 686.3V738.3h3.00V686.3zM2490.00 661.1V739.1h3.00V661.1zM2493.00 673.7V738.7h3.00V673.7zM2496.00 664.2V735.3h3.00V664.2zM2499.00 672.7V749.7h3.00V672.7zM2502.00 675.4V740.2h3.00V675.4zM2505.00 659.0V752.0h3.00V659.0zM2508.00 675.5V744.9h3.00V675.5zM2511.00 671.8V733.1h3.00V671.8zM2514.00 664.6V748.3h3.00V664.6zM2517.00 669.5V749.8h3.00V669.5zM2520.00 681.8V769.9h3.00V681.8zM2523.00 675.6V742.2h3.00V675.6zM2526.00 676.5V751.9h3.00V676.5zM2529.00 674.7V735.0h3.00V674.7zM2532.00 677.5V760.1h3.00V677.5zM2535.00 663.7V762.9h3.00V663.7zM2538.00 674.9V751.7h3.00V674.9zM2541.00 677.0V742.6h3.00V677.0zM2544.00 650.0V749.8h3.00V650.0zM2547.00 656.4V761.6h3.00V656.4zM2550.00 660.3V737.8h3.00V660.3zM2553.00 678.0V747.8h3.00V678.0zM2556.00 677.9V739.5h3.00V677.9zM2559.00 686.0V755.2h3.00V686.0zM2562.00 677.6V746.3h3.00V677.6zM2565.00 657.2V742.5h3.00V657.2zM2568.00 684.9V770.4h3.00V684.9zM2571.00 679.8V744.6h3.00V679.8zM2574.00 674.9V763.8h3.00V674.9zM2577.00 669.7V740.2h3.00V669.7zM2580.00 676.7V738.5h3.00V676.7zM2583.00 672.1V755.5h3.00V672.1zM2586.00 666.8V735.9h3.00V666.8zM2589.00 667.8V744.7h3.00V667.8zM2592.00 662.7V745.7h3.00V662.7zM2595.00 678.5V735.0h3.00V678.5zM2598.00 668.5V732.8h3.00V668.5zM2601.00 663.7V742.8h3.00V663.7zM2604.00 667.5V741.3h3.00V667.5zM2607.00 651.9V749.1h3.00V651.9zM2610.00 677.0V745.0h3.00V677.0zM2613.00 671.5V737.3h3.00V671.5zM2616.00 652.8V746.6h3.00V652.8zM2619.00 685.4V738.9h3.00V685.4zM2622.00 649.3V751.7h3.00V649.3zM2625.00 663.3V751.9h3.00V663.3zM2628.00 662.6V751.4h3.00V662.6zM2631.00 667.6V751.2h3.00V667.6zM2634.00 668.7V741.4h3.00V668.7zM2637.00 646.8V746.3h3.00V646.8zM2640.00 676.7V755.9h3.00V676.7zM2643.00 671.7V740.0h3.00V671.7zM2646.00 658.7V736.6h3.00V658.7zM2649.00 687.8V731.7h3.00V687.8zM2652.00 663.4V728.3h3.00V663.4zM2655.00 681.6V742.4h3.00V681.6zM2658.00 675.5V742.4h3.00V675.5zM2661.00 670.4V751.2h3.00V670.4zM2664.00 662.5V742.8h3.00V662.5zM2667.00 668.1V733.9h3.00V668.1zM2670.00 670.9V754.2h3.00V670.9zM2673.00 688.2V746.1h3.00V688.2zM2676.00 657.5V745.9h3.00V657.5zM2679.00 673.3V743.4h3.00V673.3zM2682.00 666.8V760.6h3.00V666.8zM2685.00 676.0V733.9h3.00V676.0zM2688.00 668.8V742.3h3.00V668.8zM2691.00 673.2V735.0h3.00V673.2zM2694.00 683.0V734.9h3.00V683.0zM2697.00 665.5V744.3h3.00V665.5zM2700.00 671.5V738.3h3.00V671.5zM2703.00 660.3V745.5h3.00V660.3zM2706.00 669.6V742.7h3.00V669.6zM2709.00 672.9V749.3h3.00V672.9zM2712.00 690.1V734.6h3.00V690.1zM2715.00 669.3V756.8h3.00V669.3zM2718.00 678.7V761.5h3.00V678.7zM2721.00 647.1V737.9h3.00V647.1zM2724.00 676.7V753.4h3.00V676.7zM2727.00 682.3V754.6h3.00V682.3zM2730.00 662.6V740.8h3.00V662.6zM2733.00 676.0V735.3h3.00V676.0zM2736.00 677.6V768.5h3.00V677.6zM2739.00 659.7V750.6h3.00V659.7zM2742.00 684.8V738.9h3.00V684.8zM2745.00 670.6V745.3h3.00V670.6zM2748.00 654.5V750.5h3.00V654.5zM2751.00 672.9V747.6h3.00V672.9zM2754.00 661.7V744.5h3.00V661.7zM2757.00 679.8V729.8h3.00V679.8zM2760.00 661.9V752.8h3.00V661.9zM2763.00 655.8V751.0h3.00V655.8zM2766.00 669.3V736.4h3.00V669.3zM2769.00 669.3V745.9h3.00V669.3zM2772.00 667.6V753.6h3.00V667.6zM2775.00 656.4V741.2h3.00V656.4zM2778.00 673.5V768.0h3.00V673.5zM2781.00 645.5V759.8h3.00V645.5zM2784.00 675.8V739.4h3.00V675.8z" fill="url(#bg)"/>
<path d="M837.84 681.0V732.9h1.41V681.0zM841.23 685.0V721.4h1.40V685.0zM850.47 687.1V732.0h1.15V687.1zM856.04 668.7V741.3h1.59V668.7zM858.65 676.3V735.4h1.40V676.3zM861.58 648.9V742.5h1.79V648.9zM864.24 669.3V730.5h1.21V669.3zM867.97 685.0V734.7h1.30V685.0zM870.56 683.0V740.0h1.17V683.0zM876.74 665.0V727.5h1.73V665.0zM885.60 693.4V740.5h1.60V693.4zM888.36 662.7V744.4h1.71V662.7zM892.31 684.9V734.9h1.14V684.9zM895.35 664.4V732.3h1.44V664.4zM907.20 672.3V737.5h1.63V672.3zM910.42 696.5V723.9h1.38V696.5zM913.35 674.6V738.6h1.19V674.6zM918.85 689.0V734.5h0.95V689.0zM921.99 655.9V742.3h1.34V655.9zM924.71 693.3V739.3h1.73V693.3zM933.31 654.2V734.8h0.98V654.2zM936.58 673.9V732.2h1.63V673.9zM948.37 682.9V755.9h1.57V682.9zM955.37 676.1V744.3h1.60V676.1zM957.17 681.0V730.5h1.75V681.0zM966.28 654.4V736.0h1.79V654.4zM969.12 694.8V746.9h1.02V694.8zM972.46 690.4V734.0h1.75V690.4zM982.61 663.9V740.5h0.93V663.9zM984.53 689.6V729.5h1.47V689.6zM987.14 678.5V754.9h1.71V678.5zM993.08 669.7V747.1h1.68V669.7zM1005.49 689.4V733.1h1.13V689.4zM1008.91 672.2V731.5h1.58V672.2zM1011.25 682.3V741.8h1.41V682.3zM1015.17 676.2V748.0h1.58V676.2zM1017.21 694.6V735.2h1.70V694.6zM1021.39 658.7V759.6h1.42V658.7zM1024.21 667.0V736.1h1.60V667.0zM1029.23 673.7V736.7h0.92V673.7zM1035.14 688.1V735.8h1.56V688.1zM1039.65 682.6V730.3h1.21V682.6zM1045.50 696.0V742.4h1.11V696.0zM1047.81 684.2V733.0h1.11V684.2zM1053.16 686.9V732.7h1.69V686.9zM1057.33 679.3V742.3h1.06V679.3zM1059.71 672.4V728.9h1.00V672.4zM1063.84 702.6V725.7h1.09V702.6zM1065.51 674.9V735.0h1.06V674.9zM1068.96 653.0V761.2h1.27V653.0zM1078.11 669.9V726.8h1.39V669.9zM1083.76 675.6V738.5h1.19V675.6zM1086.25 662.2V740.4h1.27V662.2zM1095.58 677.8V734.9h1.45V677.8zM1099.05 685.2V732.2h1.66V685.2zM1104.83 684.1V730.1h1.48V684.1zM1108.22 651.1V720.8h1.57V651.1zM1114.14 666.6V732.0h1.47V666.6zM1117.00 690.9V738.0h1.37V690.9zM1123.16 680.0V746.6h1.10V680.0zM1125.76 665.9V734.3h1.55V665.9zM1128.67 667.2V744.4h1.73V667.2zM1135.60 669.7V729.5h1.06V669.7zM1147.46 664.0V730.6h1.24V664.0zM1149.19 649.9V726.8h1.13V649.9zM1152.15 679.1V732.9h1.31V679.1zM1159.33 673.0V769.1h1.33V673.0zM1164.39 667.9V737.8h1.37V667.9zM1167.42 688.6V742.7h0.92V688.6zM1170.40 682.0V754.6h1.55V682.0zM1177.31 679.1V740.3h1.47V679.1zM1185.91 671.9V728.6h0.94V671.9zM1189.12 675.7V751.8h1.27V675.7zM1192.46 673.3V733.8h1.42V673.3zM1197.49 668.3V729.0h1.50V668.3zM1200.81 645.5V736.1h1.37V645.5zM1203.72 683.4V732.0h1.43V683.4zM1207.49 678.3V745.7h1.33V678.3zM1209.91 699.4V723.3h1.64V699.4zM1212.82 691.5V731.6h1.51V691.5zM1215.15 675.9V734.6h1.10V675.9zM1218.80 664.2V746.2h1.58V664.2zM1225.42 671.8V748.1h0.95V671.8zM1236.93 685.6V727.6h1.20V685.6zM1239.58 697.0V728.9h1.14V697.0zM1245.09 691.0V726.8h1.28V691.0zM1254.10 681.3V725.8h1.08V681.3zM1257.97 677.0V735.0h1.34V677.0zM1260.71 659.4V729.7h1.73V659.4zM1263.98 673.9V743.5h1.27V673.9zM1270.17 678.4V729.1h1.54V678.4zM1275.08 698.4V726.2h1.69V698.4zM1278.10 668.4V730.0h1.68V668.4zM1291.01 677.4V747.9h1.51V677.4zM1296.26 689.8V754.5h1.73V689.8zM1305.39 694.4V728.6h1.49V694.4zM1309.43 664.6V735.4h0.95V664.6zM1312.10 683.0V740.8h1.11V683.0zM1314.41 661.5V734.6h1.72V661.5zM1323.79 682.0V737.1h0.93V682.0zM1326.94 654.4V735.9h0.98V654.4zM1332.17 678.4V734.0h1.65V678.4zM1338.64 676.6V747.0h1.16V676.6zM1345.44 672.9V740.3h1.34V672.9zM1347.54 676.7V728.1h1.03V676.7zM1350.04 674.0V735.8h1.73V674.0zM1353.82 689.0V731.2h1.75V689.0zM1357.39 674.0V744.7h1.12V674.0zM1360.14 672.4V749.2h0.96V672.4zM1369.06 666.4V759.9h0.93V666.4zM1371.56 675.4V730.7h1.42V675.4zM1375.83 657.6V728.9h1.05V657.6zM1380.18 692.9V762.6h1.03V692.9zM1383.19 676.4V733.4h1.38V676.4zM1386.60 649.3V744.0h1.36V649.3zM1389.48 653.2V746.7h1.01V653.2zM1395.61 698.3V730.3h1.75V698.3zM1401.22 689.5V759.1h1.58V689.5zM1404.48 683.9V753.5h1.37V683.9zM1411.23 673.7V746.1h1.44V673.7zM1414.53 681.2V731.1h1.44V681.2zM1422.63 680.6V751.1h1.63V680.6zM1428.15 681.7V727.6h1.27V681.7zM1434.25 680.0V747.1h1.21V680.0zM1438.22 684.7V741.0h1.78V684.7zM1441.27 676.3V726.6h1.60V676.3zM1444.30 684.9V738.8h1.46V684.9zM1450.89 700.2V732.4h1.05V700.2zM1453.27 693.9V720.8h1.65V693.9zM1465.06 686.4V732.5h1.64V686.4zM1470.14 688.9V718.1h1.75V688.9zM1473.31 680.3V732.7h1.65V680.3zM1477.50 689.6V722.4h1.34V689.6zM1480.11 679.5V733.2h1.61V679.5zM1486.32 679.1V734.2h0.98V679.1zM1497.03 672.9V731.3h1.34V672.9zM1500.71 659.8V742.0h1.44V659.8zM1503.83 664.7V738.4h1.66V664.7zM1506.65 671.7V732.5h1.53V671.7zM1509.06 672.0V746.4h1.51V672.0zM1512.45 668.4V743.2h1.76V668.4zM1522.58 672.6V738.0h1.35V672.6zM1524.22 671.5V740.0h1.65V671.5zM1527.57 680.8V733.8h1.75V680.8zM1531.11 659.1V764.8h0.99V659.1zM1534.13 670.5V741.8h1.74V670.5zM1539.45 685.4V759.2h1.76V685.4zM1543.10 684.4V741.5h1.37V684.4zM1545.07 682.8V733.1h1.78V682.8zM1552.27 658.4V722.8h1.58V658.4zM1554.25 692.3V719.8h1.19V692.3zM1557.91 671.5V729.0h1.43V671.5zM1566.41 671.0V748.2h1.59V671.0zM1581.88 686.3V731.4h1.77V686.3zM1585.31 672.0V740.3h1.42V672.0zM1588.44 686.2V734.4h1.36V686.2zM1590.10 665.5V739.7h1.18V665.5zM1600.72 654.2V733.1h1.18V654.2zM1602.52 695.9V740.4h1.00V695.9zM1609.74 679.4V723.6h1.08V679.4zM1618.49 671.5V734.6h1.04V671.5zM1627.63 656.1V739.5h1.23V656.1zM1632.06 677.3V723.2h1.59V677.3zM1635.33 674.5V729.9h1.75V674.5zM1638.96 660.4V744.0h1.58V660.4zM1642.18 677.3V734.3h1.18V677.3zM1650.93 658.6V742.3h1.75V658.6zM1657.68 652.4V740.8h1.07V652.4zM1665.12 682.0V730.0h1.20V682.0zM1677.43 688.5V746.8h1.42V688.5zM1684.13 685.2V727.3h1.50V685.2zM1702.03 667.2V749.2h1.53V667.2zM1705.28 665.3V768.5h1.44V665.3zM1708.36 693.7V739.6h0.98V693.7zM1710.11 678.6V728.5h1.53V678.6zM1713.21 669.2V759.2h1.47V669.2zM1717.29 668.8V729.4h1.40V668.8zM1720.19 693.4V746.1h1.10V693.4zM1725.29 680.2V732.8h1.61V680.2zM1729.61 684.2V743.0h0.93V684.2zM1732.29 661.8V740.4h0.96V661.8zM1734.97 656.7V731.2h1.36V656.7zM1746.09 666.5V744.2h1.79V666.5zM1750.05 682.1V735.9h1.51V682.1zM1752.49 687.4V750.1h1.26V687.4zM1755.34 676.2V739.4h1.29V676.2zM1759.12 696.4V732.1h1.40V696.4zM1773.02 677.4V729.3h1.09V677.4zM1779.29 677.2V722.6h1.22V677.2zM1782.36 669.6V735.8h0.94V669.6zM1788.21 683.2V731.3h0.99V683.2zM1792.10 686.5V730.0h1.79V686.5zM1798.13 679.9V738.6h1.00V679.9zM1801.89 684.6V735.5h0.92V684.6zM1806.55 676.4V741.0h1.56V676.4zM1809.45 685.6V740.9h0.91V685.6zM1813.06 678.3V743.8h1.65V678.3zM1818.66 674.9V730.3h0.96V674.9zM1821.31 674.6V742.3h1.48V674.6zM1825.19 678.9V737.4h0.99V678.9zM1828.00 657.0V729.2h1.43V657.0zM1830.08 693.3V727.7h1.55V693.3zM1840.05 671.8V738.1h1.48V671.8zM1849.86 673.0V731.5h1.11V673.0zM1864.97 691.8V740.7h0.98V691.8zM1867.75 677.4V741.4h1.12V677.4zM1878.04 681.2V743.7h1.04V681.2zM1887.22 648.3V753.1h1.63V648.3zM1899.74 690.8V745.6h1.67V690.8zM1912.12 662.9V729.2h0.95V662.9zM1914.03 683.7V761.2h1.57V683.7zM1918.29 675.5V739.9h1.01V675.5zM1920.67 675.1V753.8h1.78V675.1zM1932.54 685.8V748.6h1.23V685.8zM1944.23 676.3V748.7h0.97V676.3zM1947.69 688.6V730.5h1.31V688.6zM1969.26 685.5V759.2h1.51V685.5zM1971.55 694.7V736.3h1.75V694.7zM1974.58 682.3V731.7h1.21V682.3zM1998.77 684.4V725.4h1.12V684.4zM2008.09 687.4V731.5h1.59V687.4zM2011.66 671.3V747.8h0.99V671.3zM2014.56 679.2V725.3h1.38V679.2zM2019.51 670.5V734.9h1.74V670.5zM2025.55 688.0V740.1h1.09V688.0zM2029.44 683.2V742.8h1.54V683.2zM2043.05 690.1V723.5h1.13V690.1zM2046.79 679.1V741.1h1.77V679.1zM2055.14 678.3V734.6h0.96V678.3zM2058.99 686.6V727.3h1.00V686.6zM2061.25 688.3V740.2h1.59V688.3zM2064.66 681.7V735.8h1.52V681.7zM2070.04 690.6V740.6h1.65V690.6zM2082.40 664.8V737.6h0.91V664.8zM2094.19 692.7V749.4h1.03V692.7zM2103.03 694.4V752.5h0.96V694.4zM2109.20 698.4V740.0h1.55V698.4zM2112.18 691.7V730.3h1.37V691.7zM2116.34 667.0V755.3h1.24V667.0zM2118.64 665.7V733.4h1.25V665.7zM2125.26 681.6V757.4h1.50V681.6zM2127.92 688.7V744.2h1.00V688.7zM2130.29 678.6V727.4h1.33V678.6zM2133.74 673.2V730.2h0.96V673.2zM2140.41 659.9V725.7h1.10V659.9zM2148.66 675.6V747.1h1.75V675.6zM2154.54 686.0V745.2h0.97V686.0zM2160.54 672.3V733.6h1.31V672.3zM2164.96 691.4V769.8h1.01V691.4zM2166.78 678.0V735.7h1.49V678.0zM2172.94 700.9V724.6h1.11V700.9zM2176.30 659.6V727.5h1.62V659.6zM2178.23 658.6V731.6h1.71V658.6zM2184.07 677.6V734.4h1.10V677.6zM2187.83 674.7V742.8h1.57V674.7zM2193.29 679.4V729.6h1.75V679.4zM2199.75 662.5V730.1h1.79V662.5zM2202.55 662.0V727.2h1.80V662.0zM2205.59 692.0V727.7h1.27V692.0zM2209.62 673.2V729.9h1.05V673.2zM2211.95 691.2V732.9h1.31V691.2zM2215.91 650.0V739.2h1.01V650.0zM2218.40 663.4V746.1h1.42V663.4zM2220.71 674.3V729.0h1.43V674.3zM2232.51 643.8V734.9h1.75V643.8zM2235.60 659.6V731.6h0.92V659.6zM2242.38 668.2V733.8h1.38V668.2zM2244.49 676.2V733.0h1.00V676.2zM2257.82 678.2V745.6h0.97V678.2zM2262.69 688.0V740.8h1.11V688.0zM2265.89 664.8V746.6h1.57V664.8zM2272.13 682.9V732.8h1.33V682.9zM2274.97 659.2V750.3h1.76V659.2zM2281.67 660.5V734.4h1.27V660.5zM2287.15 668.9V737.9h1.50V668.9zM2289.07 670.1V739.8h1.14V670.1zM2293.18 687.2V735.1h0.97V687.2zM2295.64 675.1V728.3h1.53V675.1zM2298.24 667.6V728.5h1.51V667.6zM2319.42 671.5V728.0h1.59V671.5zM2335.12 692.1V738.8h0.91V692.1zM2337.36 688.1V741.3h0.90V688.1zM2341.32 690.6V733.2h1.14V690.6zM2344.22 655.8V739.4h1.74V655.8zM2346.76 694.9V737.2h1.19V694.9zM2349.33 685.4V732.1h0.98V685.4zM2356.01 679.1V732.5h1.61V679.1zM2358.71 684.0V738.9h1.74V684.0zM2364.33 670.7V728.8h1.55V670.7zM2367.30 691.4V726.0h1.43V691.4zM2374.34 693.3V740.8h0.98V693.3zM2376.17 681.7V742.6h1.42V681.7zM2379.92 679.1V738.7h1.28V679.1zM2386.18 679.8V735.8h1.16V679.8zM2392.21 696.3V740.4h1.18V696.3zM2395.16 673.3V744.7h1.59V673.3zM2401.31 682.9V744.1h1.18V682.9zM2404.06 666.0V730.8h0.94V666.0zM2409.23 676.4V756.6h1.08V676.4zM2412.77 690.5V759.5h1.54V690.5zM2415.85 686.1V737.1h1.25V686.1zM2418.86 682.3V728.0h1.19V682.3zM2422.57 685.6V735.8h1.30V685.6zM2425.08 666.1V746.9h1.31V666.1zM2434.04 673.1V738.3h1.32V673.1zM2442.80 676.7V729.1h0.98V676.7zM2446.41 654.8V748.9h1.16V654.8zM2449.04 695.4V736.0h1.05V695.4zM2451.60 693.0V752.7h1.59V693.0zM2454.14 674.3V727.2h1.77V674.3zM2463.75 672.0V727.4h1.76V672.0zM2473.85 669.7V719.7h1.07V669.7zM2475.48 675.6V734.1h1.12V675.6zM2478.43 670.0V724.5h1.67V670.0zM2481.81 692.7V724.1h1.07V692.7zM2487.86 699.1V724.9h1.59V699.1zM2491.09 666.3V732.7h1.66V666.3zM2493.67 677.0V734.0h1.22V677.0zM2500.36 683.7V744.7h1.47V683.7zM2520.57 693.9V766.3h1.49V693.9zM2524.47 681.7V730.1h1.20V681.7zM2532.93 687.6V750.2h1.74V687.6zM2535.72 671.2V756.8h1.68V671.2zM2547.45 659.6V755.7h1.21V659.6zM2550.31 663.1V735.0h1.62V663.1zM2556.68 689.5V726.1h1.32V689.5zM2560.37 693.7V742.4h1.47V693.7zM2565.75 660.4V733.4h1.69V660.4zM2571.69 692.3V734.6h1.34V692.3zM2574.64 688.4V753.4h1.23V688.4zM2577.04 678.8V733.0h1.72V678.8zM2584.06 683.9V744.0h0.98V683.9zM2587.42 678.4V731.3h1.10V678.4zM2596.25 691.6V730.6h1.24V691.6zM2599.32 672.7V724.3h1.20V672.7zM2601.21 677.1V728.8h1.50V677.1zM2610.71 688.1V732.5h1.72V688.1zM2613.26 673.8V729.3h1.73V673.8zM2625.71 667.0V742.3h1.74V667.0zM2631.40 672.9V744.2h1.44V672.9zM2634.16 670.7V735.3h1.32V670.7zM2643.97 675.8V730.7h1.13V675.8zM2650.13 698.8V721.2h1.43V698.8zM2656.24 684.2V729.1h1.65V684.2zM2658.14 687.1V732.2h0.98V687.1zM2662.08 684.3V745.2h1.31V684.3zM2667.31 675.1V724.5h1.08V675.1zM2670.43 673.9V749.9h1.05V673.9zM2673.30 695.9V738.8h1.35V695.9zM2679.59 677.7V734.3h1.75V677.7zM2682.14 677.2V747.0h1.05V677.2zM2685.76 682.2V723.6h1.22V682.2zM2689.70 677.6V740.2h1.04V677.6zM2698.41 672.3V737.1h1.47V672.3zM2701.06 682.3V724.9h1.40V682.3zM2704.51 671.8V736.4h1.23V671.8zM2709.69 679.7V745.1h1.75V679.7zM2713.03 692.4V728.7h1.71V692.4zM2715.60 682.0V750.6h1.35V682.0zM2718.81 686.5V755.5h1.74V686.5zM2722.22 652.3V731.5h1.45V652.3zM2725.62 685.2V748.1h1.23V685.2zM2727.22 692.5V752.3h1.64V692.5zM2731.65 666.4V736.1h0.95V666.4zM2734.37 686.7V722.4h1.14V686.7zM2745.55 674.9V734.3h1.73V674.9zM2752.76 684.0V738.4h0.98V684.0zM2757.25 682.1V719.3h0.95V682.1zM2763.35 665.1V740.9h1.05V665.1zM2769.53 676.0V740.9h1.78V676.0zM2773.22 678.1V749.5h1.78V678.1zM2775.69 667.3V738.5h1.04V667.3zM2778.05 680.7V756.5h1.51V680.7zM2784.79 681.8V732.6h1.69V681.8z" fill="#d2cdb0" fill-opacity="0.55"/>
<line x1="837" x2="2787" y1="712.0" y2="712.0" stroke="#000" stroke-opacity="0.025" stroke-width="2"/>
<rect x="1644.6" y="690" width="7.8" height="580.8" fill="#d3bd90"/>
<path d="M1647 676L1650.2 676L1649.2 800L1648.7 935L1648.2 800Z" fill="#fff"/>
<path d="M1648.2 800L1649.2 800L1648.7 935Z" fill="#e9e2cc"/>
<line x1="812" x2="2826" y1="678.6" y2="678.6" stroke="#9d489f" stroke-width="2.1"/>
<circle cx="812.4" cy="678.6" r="9.6" fill="#fff" stroke="#9b449e" stroke-width="4"/>
<g font-family="'Liberation Sans', sans-serif" font-size="20" fill="#555"><text x="782" y="1277.8" text-anchor="end">0</text><text x="782" y="1138.1" text-anchor="end">500</text><text x="782" y="998.4" text-anchor="end">1000</text><text x="782" y="858.7" text-anchor="end">1500</text><text x="782" y="719.0" text-anchor="end">2000</text><text x="837.0" y="1301" text-anchor="middle">23-Jun</text><text x="1115.6" y="1301" text-anchor="middle">24-Jun</text><text x="1394.2" y="1301" text-anchor="middle">25-Jun</text><text x="1672.8" y="1301" text-anchor="middle">26-Jun</text><text x="1951.4" y="1301" text-anchor="middle">27-Jun</text><text x="2230.0" y="1301" text-anchor="middle">28-Jun</text><text x="2508.6" y="1301" text-anchor="middle">29-Jun</text><text x="2787.2" y="1301" text-anchor="middle">30-Jun</text></g>
<g font-family="'Liberation Sans', sans-serif" font-size="24" fill="#000">
<text x="824.5" y="668.6">IN 95th Percentile</text><text x="1716" y="668.6">OUT 95th Percentile</text></g>
<g font-family="'Liberation Sans', sans-serif" font-size="24" font-weight="700" fill="#666">
<text x="1812.3" y="1348.2" text-anchor="middle">Time ( DD-MMM )</text>
<text transform="translate(712.6 937.3) rotate(-90)" text-anchor="middle">Traffic( in bps )</text></g>
<rect x="2874" y="616" width="32" height="32" fill="#5bc0de"/><rect x="2874" y="676" width="32" height="32" fill="#eea650"/>
</svg>
<svg class="icons" style="will-change:transform" width="3360" height="2002" viewBox="0 0 3360 2002">
<g fill="none" stroke="#585858" stroke-width="1.9" stroke-linejoin="miter">
<rect x="3055.1" y="371.1" width="50" height="33.8" rx="5.5" stroke="#555" stroke-width="2"/>
<path d="M3060.6 374.6Q3080.2 399.5 3099.8 374.6" stroke="#777" stroke-width="1.8"/>
<path d="M3060.6 399.6L3069.8 390.4M3090.2 390.4L3099.8 399.6" stroke="#666" stroke-width="1.9"/>
<path d="M3135.4 367.3H3157.4L3166.6 376.2V404.7H3135.4Z"/>
<path d="M3154.8 367.3V380H3166.6"/>
<path d="M3187.4 367.3H3209.4L3218.6 376.2V404.7H3187.4Z"/>
<path d="M3206.8 367.3V380H3218.6"/>
<path d="M3148.6 381.5C3150.6 386 3148.8 391 3146.5 393.5C3144.5 396 3142.5 397.6 3140.8 398.6M3147.2 392.6C3151 391.3 3155.5 391.3 3158.8 392.6" stroke="#5a5a5a" stroke-width="2.9" stroke-linecap="round"/>
</g>
<text x="3203.1" y="398.4" text-anchor="middle" font-family="'Liberation Sans', sans-serif" font-weight="700" font-size="13.6" fill="#555" stroke="#555" stroke-width="0.6" textLength="26" lengthAdjust="spacingAndGlyphs">CSV</text>
<g transform="translate(3248 370.4) scale(0.02025 0.0208)"><path d="M888 1184l116-116-152-152-116 116v56h96v96h56zM1328 464q-16-16-33 1l-350 350q-17 17-1 33t33-1l350-350q17-17 1-33zM1408 1058v190q0 119-84.500 203.500t-203.500 84.500h-832q-119 0-203.500-84.500t-84.500-203.500v-832q0-119 84.500-203.500t203.500-84.500h832q63 0 117 25 15 7 18 23 3 17-9 29l-49 49q-14 14-32 8-23-6-45-6h-832q-66 0-113 47t-47 113v832q0 66 47 113t113 47h832q66 0 113-47t47-113v-126q0-13 9-22l64-64q15-15 35-7t20 29zM1312 320l288 288-672 672h-288v-288zM1756 452l-92 92-288-288 92-92q28-28 68-28t68 28l152 152q28 28 28 68t-28 68z" fill="#444"/></g>
<!-- chart type icons -->
<rect x="3019" y="503" width="42" height="30" fill="#f8f8f8" stroke="#888" stroke-width="2"/>
<path d="M3020.2 516.1L3027.4 519.9L3035.4 515.3L3046.4 513.6L3058.2 506.9V530H3020.2Z" fill="#b9b9b9"/>
<path d="M3020.2 521.5L3027.4 524.4L3036 520L3047 518.2L3058.2 512.5V530H3020.2Z" fill="#d4d4d4"/>
<path d="M3022.3 525.8L3027.8 527.1L3037.9 523.3L3047.2 522.5L3058.2 519.1V529.8H3022.3Z" fill="#666"/>
<rect x="3084" y="501" width="40" height="30" fill="#f8f8f9"/>
<g fill="#c3c3c3"><rect x="3085.1" y="518.2" width="6.8" height="11"/><rect x="3092.7" y="513.2" width="6.8" height="16"/><rect x="3100.7" y="508.5" width="6.8" height="20.7"/><rect x="3108.3" y="503.9" width="7.2" height="25.3"/><rect x="3116.3" y="508.1" width="6.4" height="21.1"/></g>
<rect x="3148" y="501.8" width="40.8" height="28.7" fill="#f8f8f9"/>
<g fill="none" stroke="#8a8a8a" stroke-width="1.8" stroke-linejoin="round">
<path d="M3148.4 517.8C3153 514 3156 509.8 3158.9 509.8C3163 509.8 3169 517 3173.7 517L3187.6 505.6"/>
<path d="M3148.4 522.9C3153 520 3156 517 3159.3 517C3163 517 3169 522.5 3173.7 522.5C3178 522.5 3183 518.5 3187.6 516.6" stroke-width="2.2"/>
<path d="M3148.4 526.7C3153 524.5 3156 521.6 3159.3 521.6C3163 521.6 3169 526.7 3173.7 526.7C3178 526.7 3183 525.4 3187.6 525.4" stroke-width="2.4"/>
</g>
<!-- sort icons -->
<path d="M715.7 1564.5L723.4 1556L731 1564.5Z" fill="#c8c8c8"/><path d="M715.7 1567.4L723.4 1576L731 1567.4Z" fill="#e4e4e4"/>
<path d="M664 1935.9L671.7 1927.4L679.4 1935.9Z" fill="#c8c8c8"/><path d="M664 1938.8L671.7 1947.4L679.4 1938.8Z" fill="#e4e4e4"/>
</svg>
<nav>
<span class="t" style="left:53.97px;top:21.87px;font:400 28.5px/28.5px 'Liberation Sans', sans-serif;color:#fff;transform:scaleX(0.9658);-webkit-text-stroke:0.3px #fff;">Dashboard</span>
<span class="t" style="left:297.80px;top:21.87px;font:400 28.5px/28.5px 'Liberation Sans', sans-serif;color:#fff;transform:scaleX(0.9985);-webkit-text-stroke:0.3px #fff;">Inventory</span>
<span class="t" style="left:525.80px;top:21.87px;font:400 28.5px/28.5px 'Liberation Sans', sans-serif;color:#fff;transform:scaleX(0.9323);-webkit-text-stroke:0.3px #fff;">WLC</span>
<span class="t" style="left:694.80px;top:21.87px;font:400 28.5px/28.5px 'Liberation Sans', sans-serif;color:#fff;transform:scaleX(0.9861);-webkit-text-stroke:0.3px #fff;">Attacks</span>
<span class="t" style="left:896.18px;top:21.87px;font:400 28.5px/28.5px 'Liberation Sans', sans-serif;color:#fff;transform:scaleX(0.9612);-webkit-text-stroke:0.3px #fff;">DPI</span>
<span class="t" style="left:1050.88px;top:21.87px;font:400 28.5px/28.5px 'Liberation Sans', sans-serif;color:#fff;transform:scaleX(1.0104);-webkit-text-stroke:0.3px #fff;">NCM</span>
<span class="t" style="left:1225.40px;top:21.87px;font:400 28.5px/28.5px 'Liberation Sans', sans-serif;color:#fff;transform:scaleX(0.9012);-webkit-text-stroke:0.3px #fff;">IPSLA</span>
<span class="t" style="left:1407.70px;top:21.87px;font:400 28.5px/28.5px 'Liberation Sans', sans-serif;color:#fff;transform:scaleX(0.9579);-webkit-text-stroke:0.3px #fff;">Alarms</span>
<span class="t" style="left:1601.90px;top:21.87px;font:400 28.5px/28.5px 'Liberation Sans', sans-serif;color:#fff;transform:scaleX(0.9490);-webkit-text-stroke:0.3px #fff;">Maps</span>
<span class="t" style="left:1777.90px;top:21.87px;font:400 28.5px/28.5px 'Liberation Sans', sans-serif;color:#fff;transform:scaleX(1.0421);-webkit-text-stroke:0.3px #fff;">Workflow</span>
<span class="t" style="left:2009.18px;top:21.87px;font:400 28.5px/28.5px 'Liberation Sans', sans-serif;color:#fff;transform:scaleX(0.9575);-webkit-text-stroke:0.3px #fff;">Reports</span>
<span class="t" style="left:2214.55px;top:21.87px;font:400 28.5px/28.5px 'Liberation Sans', sans-serif;color:#fff;transform:scaleX(0.9545);-webkit-text-stroke:0.3px #fff;">Settings</span>
</nav>
<div class="subnav">
<span class="t" style="left:49.58px;top:90.69px;font:400 26px/26px 'Liberation Sans', sans-serif;color:#000;transform:scaleX(1.0622);-webkit-text-stroke:0.3px #000;">Netflow</span>
<span class="t" style="left:242.11px;top:90.69px;font:400 26px/26px 'Liberation Sans', sans-serif;color:#000;transform:scaleX(1.0459);-webkit-text-stroke:0.3px #000;">NCM</span>
<span class="t" style="left:403.78px;top:90.69px;font:400 26px/26px 'Liberation Sans', sans-serif;color:#000;transform:scaleX(1.0123);-webkit-text-stroke:0.3px #000;">DPI</span>
<span class="t" style="left:548.60px;top:90.69px;font:400 26px/26px 'Liberation Sans', sans-serif;color:#000;transform:scaleX(1.0094);-webkit-text-stroke:0.3px #000;">Audit</span>
</div>
<aside>
<span class="t" style="left:39.62px;top:192.27px;font:700 35px/35px 'Liberation Sans', sans-serif;color:#000;transform:scaleX(0.9918);-webkit-text-stroke:0.8px #000;">Netflow Reports</span>
<span class="t" style="left:39.51px;top:294.50px;font:400 28px/28px 'Liberation Sans', sans-serif;color:#444;transform:scaleX(1.0446);-webkit-text-stroke:0.3px #444;">Billing</span>
<span class="t" style="left:40.62px;top:360.40px;font:400 28px/28px 'Liberation Sans', sans-serif;color:#111;transform:scaleX(0.9761);-webkit-text-stroke:0.3px #111;">Capacity Planning</span>
<span class="t" style="left:40.63px;top:426.30px;font:400 28px/28px 'Liberation Sans', sans-serif;color:#444;transform:scaleX(0.9745);-webkit-text-stroke:0.3px #444;">Compare Reports</span>
<span class="t" style="left:40.01px;top:492.20px;font:400 28px/28px 'Liberation Sans', sans-serif;color:#444;transform:scaleX(0.9883);-webkit-text-stroke:0.3px #444;">Consolidated Report</span>
<span class="t" style="left:39.67px;top:558.10px;font:400 28px/28px 'Liberation Sans', sans-serif;color:#444;transform:scaleX(0.9640);-webkit-text-stroke:0.3px #444;">Forensics</span>
<span class="t" style="left:40.02px;top:624.00px;font:400 28px/28px 'Liberation Sans', sans-serif;color:#444;transform:scaleX(0.9878);-webkit-text-stroke:0.3px #444;">IPGroup Consolidated</span>
<span class="t" style="left:39.92px;top:689.90px;font:400 28px/28px 'Liberation Sans', sans-serif;color:#444;transform:scaleX(1.0418);-webkit-text-stroke:0.3px #444;">Protocol Distribution</span>
<span class="t" style="left:40.02px;top:755.80px;font:400 28px/28px 'Liberation Sans', sans-serif;color:#444;transform:scaleX(0.9913);-webkit-text-stroke:0.3px #444;">Report Profiles</span>
<span class="t" style="left:40.06px;top:821.70px;font:400 28px/28px 'Liberation Sans', sans-serif;color:#444;transform:scaleX(0.9446);-webkit-text-stroke:0.3px #444;">Schedule</span>
<span class="t" style="left:40.04px;top:887.60px;font:400 28px/28px 'Liberation Sans', sans-serif;color:#444;transform:scaleX(0.9563);-webkit-text-stroke:0.3px #444;">Search Report</span>
<span class="t" style="left:40.70px;top:953.50px;font:400 28px/28px 'Liberation Sans', sans-serif;color:#444;transform:scaleX(0.9728);-webkit-text-stroke:0.3px #444;">WAAS Dashboard</span>
<span class="t" style="left:40.70px;top:1019.40px;font:400 28px/28px 'Liberation Sans', sans-serif;color:#444;transform:scaleX(0.9561);-webkit-text-stroke:0.3px #444;">WAAS Devices List</span>
</aside>
<main>
<span class="t" style="left:499.11px;top:205.54px;font:400 40.7px/40.7px 'DejaVu Serif', 'Liberation Serif', serif;color:#111;transform:scaleX(0.9462);-webkit-text-stroke:1.1px #111;word-spacing:-2.5px;">Capacity Planning</span>
<span class="t" style="left:560.27px;top:374.10px;font:400 28px/28px 'Liberation Sans', sans-serif;color:#000;transform:scaleX(1.0137);-webkit-text-stroke:0.3px #000;">DataCentreV9Medianetipv4</span>
<span class="t" style="left:916.98px;top:374.10px;font:400 28px/28px 'Liberation Sans', sans-serif;color:#000;transform:scaleX(1.0160);-webkit-text-stroke:0.3px #000;">(MediaGigabitEthernet0/1)</span>
<span class="t" style="left:1256.90px;top:374.10px;font:400 28px/28px 'Liberation Sans', sans-serif;color:#000;transform:scaleX(1.0000);-webkit-text-stroke:0.3px #000;">|</span>
<span class="t" style="left:1271.25px;top:374.10px;font:400 28px/28px 'Liberation Sans', sans-serif;color:#000;transform:scaleX(0.9748);-webkit-text-stroke:0.3px #000;">Previous Week[</span>
<span class="t" style="left:1469.67px;top:374.10px;font:400 28px/28px 'Liberation Sans', sans-serif;color:#000;transform:scaleX(1.0328);-webkit-text-stroke:0.3px #000;">2019-06-23</span>
<span class="t" style="left:1624.70px;top:374.10px;font:400 28px/28px 'Liberation Sans', sans-serif;color:#000;transform:scaleX(1.0015);-webkit-text-stroke:0.3px #000;">00:00</span>
<span class="t" style="left:1702.69px;top:374.10px;font:400 28px/28px 'Liberation Sans', sans-serif;color:#000;transform:scaleX(0.9120);-webkit-text-stroke:0.3px #000;">--</span>
<span class="t" style="left:1726.97px;top:374.10px;font:400 28px/28px 'Liberation Sans', sans-serif;color:#000;transform:scaleX(1.0307);-webkit-text-stroke:0.3px #000;">2019-06-29</span>
<span class="t" style="left:1881.21px;top:374.10px;font:400 28px/28px 'Liberation Sans', sans-serif;color:#000;transform:scaleX(0.9922);-webkit-text-stroke:0.3px #000;">23:59 ]</span>
<span class="t" style="left:1973.00px;top:374.10px;font:400 28px/28px 'Liberation Sans', sans-serif;color:#000;transform:scaleX(1.0000);-webkit-text-stroke:0.3px #000;">|</span>
<span class="t" style="left:1986.62px;top:374.10px;font:400 28px/28px 'Liberation Sans', sans-serif;color:#2e7d1e;transform:scaleX(0.9835);-webkit-text-stroke:0.3px #2e7d1e;">Generate Bill</span>
<span class="t" style="left:600.33px;top:482.10px;font:400 28px/28px 'Liberation Sans', sans-serif;color:#000;transform:scaleX(0.9848);-webkit-text-stroke:0.3px #000;">1 Minute Average</span>
<span class="t" style="left:599.13px;top:1810.30px;font:400 28px/28px 'Liberation Sans', sans-serif;color:#000;transform:scaleX(0.9850);-webkit-text-stroke:0.3px #000;">Data Points - IN</span>
<span class="t" style="left:2916.95px;top:616.81px;font:400 32px/32px 'Liberation Sans', sans-serif;color:#555;transform:scaleX(1.0254);-webkit-text-stroke:0.3px #555;">IN</span>
<span class="t" style="left:2917.02px;top:676.61px;font:400 32px/32px 'Liberation Sans', sans-serif;color:#555;transform:scaleX(0.9833);-webkit-text-stroke:0.3px #555;">OUT</span>
<span class="t" style="left:593.60px;top:1546.60px;font:400 28px/28px 'Liberation Sans', sans-serif;color:#2a2a2a;transform:scaleX(0.9999);-webkit-text-stroke:0.75px #2a2a2a;">Category</span>
<span class="t" style="left:978.60px;top:1546.60px;font:400 28px/28px 'Liberation Sans', sans-serif;color:#2a2a2a;transform:scaleX(1.0011);-webkit-text-stroke:0.75px #2a2a2a;">Total</span>
<span class="t" style="left:1355.57px;top:1546.60px;font:400 28px/28px 'Liberation Sans', sans-serif;color:#2a2a2a;transform:scaleX(1.0156);-webkit-text-stroke:0.75px #2a2a2a;">Max</span>
<span class="t" style="left:1733.25px;top:1546.60px;font:400 28px/28px 'Liberation Sans', sans-serif;color:#2a2a2a;transform:scaleX(1.0764);-webkit-text-stroke:0.75px #2a2a2a;">Min</span>
<span class="t" style="left:2113.50px;top:1546.60px;font:400 28px/28px 'Liberation Sans', sans-serif;color:#2a2a2a;transform:scaleX(0.9623);-webkit-text-stroke:0.75px #2a2a2a;">Average</span>
<span class="t" style="left:2489.50px;top:1546.60px;font:400 28px/28px 'Liberation Sans', sans-serif;color:#2a2a2a;transform:scaleX(1.0001);-webkit-text-stroke:0.75px #2a2a2a;">Standard Deviation</span>
<span class="t" style="left:2868.39px;top:1546.60px;font:400 28px/28px 'Liberation Sans', sans-serif;color:#2a2a2a;transform:scaleX(1.0080);-webkit-text-stroke:0.75px #2a2a2a;">95th Percentile</span>
<span class="t" style="left:600.60px;top:1624.49px;font:400 26px/26px 'Liberation Sans', sans-serif;color:#333;transform:scaleX(0.9957);-webkit-text-stroke:0.3px #333;">Traffic IN</span>
<span class="t" style="left:979.80px;top:1624.49px;font:400 26px/26px 'Liberation Sans', sans-serif;color:#333;transform:scaleX(0.9952);-webkit-text-stroke:0.3px #333;">151.476 MB</span>
<span class="t" style="left:1356.64px;top:1624.49px;font:400 26px/26px 'Liberation Sans', sans-serif;color:#333;transform:scaleX(0.9629);-webkit-text-stroke:0.3px #333;">2.271 Kbps</span>
<span class="t" style="left:1734.46px;top:1624.49px;font:400 26px/26px 'Liberation Sans', sans-serif;color:#333;transform:scaleX(0.9428);-webkit-text-stroke:0.3px #333;">0.00 bps</span>
<span class="t" style="left:2112.54px;top:1624.49px;font:400 26px/26px 'Liberation Sans', sans-serif;color:#333;transform:scaleX(0.9598);-webkit-text-stroke:0.3px #333;">2.004 Kbps</span>
<span class="t" style="left:2491.53px;top:1624.49px;font:400 26px/26px 'Liberation Sans', sans-serif;color:#333;transform:scaleX(0.9660);-webkit-text-stroke:0.3px #333;">102.617 bps</span>
<span class="t" style="left:2868.42px;top:1624.49px;font:400 26px/26px 'Liberation Sans', sans-serif;color:#333;transform:scaleX(0.9773);-webkit-text-stroke:0.3px #333;">2.117 Kbps</span>
<span class="t" style="left:600.60px;top:1703.99px;font:400 26px/26px 'Liberation Sans', sans-serif;color:#333;transform:scaleX(0.9819);-webkit-text-stroke:0.3px #333;">Traffic OUT</span>
<span class="t" style="left:979.80px;top:1703.99px;font:400 26px/26px 'Liberation Sans', sans-serif;color:#333;transform:scaleX(0.9952);-webkit-text-stroke:0.3px #333;">151.476 MB</span>
<span class="t" style="left:1356.64px;top:1703.99px;font:400 26px/26px 'Liberation Sans', sans-serif;color:#333;transform:scaleX(0.9629);-webkit-text-stroke:0.3px #333;">2.271 Kbps</span>
<span class="t" style="left:1734.46px;top:1703.99px;font:400 26px/26px 'Liberation Sans', sans-serif;color:#333;transform:scaleX(0.9428);-webkit-text-stroke:0.3px #333;">0.00 bps</span>
<span class="t" style="left:2112.54px;top:1703.99px;font:400 26px/26px 'Liberation Sans', sans-serif;color:#333;transform:scaleX(0.9598);-webkit-text-stroke:0.3px #333;">2.004 Kbps</span>
<span class="t" style="left:2491.53px;top:1703.99px;font:400 26px/26px 'Liberation Sans', sans-serif;color:#333;transform:scaleX(0.9660);-webkit-text-stroke:0.3px #333;">102.617 bps</span>
<span class="t" style="left:2868.42px;top:1703.99px;font:400 26px/26px 'Liberation Sans', sans-serif;color:#333;transform:scaleX(0.9773);-webkit-text-stroke:0.3px #333;">2.117 Kbps</span>
<span class="t" style="left:594.30px;top:1918.00px;font:400 28px/28px 'Liberation Sans', sans-serif;color:#2a2a2a;transform:scaleX(0.9817);-webkit-text-stroke:0.75px #2a2a2a;">Time</span>
<span class="t" style="left:1126.85px;top:1918.00px;font:400 28px/28px 'Liberation Sans', sans-serif;color:#2a2a2a;transform:scaleX(1.0764);-webkit-text-stroke:0.75px #2a2a2a;">Min</span>
<span class="t" style="left:1655.87px;top:1918.00px;font:400 28px/28px 'Liberation Sans', sans-serif;color:#2a2a2a;transform:scaleX(1.0156);-webkit-text-stroke:0.75px #2a2a2a;">Max</span>
<span class="t" style="left:2185.20px;top:1918.00px;font:400 28px/28px 'Liberation Sans', sans-serif;color:#2a2a2a;transform:scaleX(1.0208);-webkit-text-stroke:0.75px #2a2a2a;">Avg</span>
<span class="t" style="left:2713.10px;top:1918.00px;font:400 28px/28px 'Liberation Sans', sans-serif;color:#2a2a2a;transform:scaleX(1.0011);-webkit-text-stroke:0.75px #2a2a2a;">Total</span>
<span class="t" style="left:601.10px;top:1995.29px;font:400 26px/26px 'Liberation Sans', sans-serif;color:#333;transform:scaleX(0.9655);-webkit-text-stroke:0.3px #333;">Jun 23, 19</span>
<span class="t" style="left:1130.94px;top:1995.29px;font:400 26px/26px 'Liberation Sans', sans-serif;color:#333;transform:scaleX(0.9629);-webkit-text-stroke:0.3px #333;">1.787 Kbps</span>
<span class="t" style="left:1658.64px;top:1995.29px;font:400 26px/26px 'Liberation Sans', sans-serif;color:#333;transform:scaleX(0.9629);-webkit-text-stroke:0.3px #333;">2.226 Kbps</span>
<span class="t" style="left:2185.52px;top:1995.29px;font:400 26px/26px 'Liberation Sans', sans-serif;color:#333;transform:scaleX(0.9773);-webkit-text-stroke:0.3px #333;">2.011 Kbps</span>
<span class="t" style="left:2713.60px;top:1995.29px;font:400 26px/26px 'Liberation Sans', sans-serif;color:#333;transform:scaleX(1.0009);-webkit-text-stroke:0.3px #333;">21.715 MB</span>
</main>
</body></html>
